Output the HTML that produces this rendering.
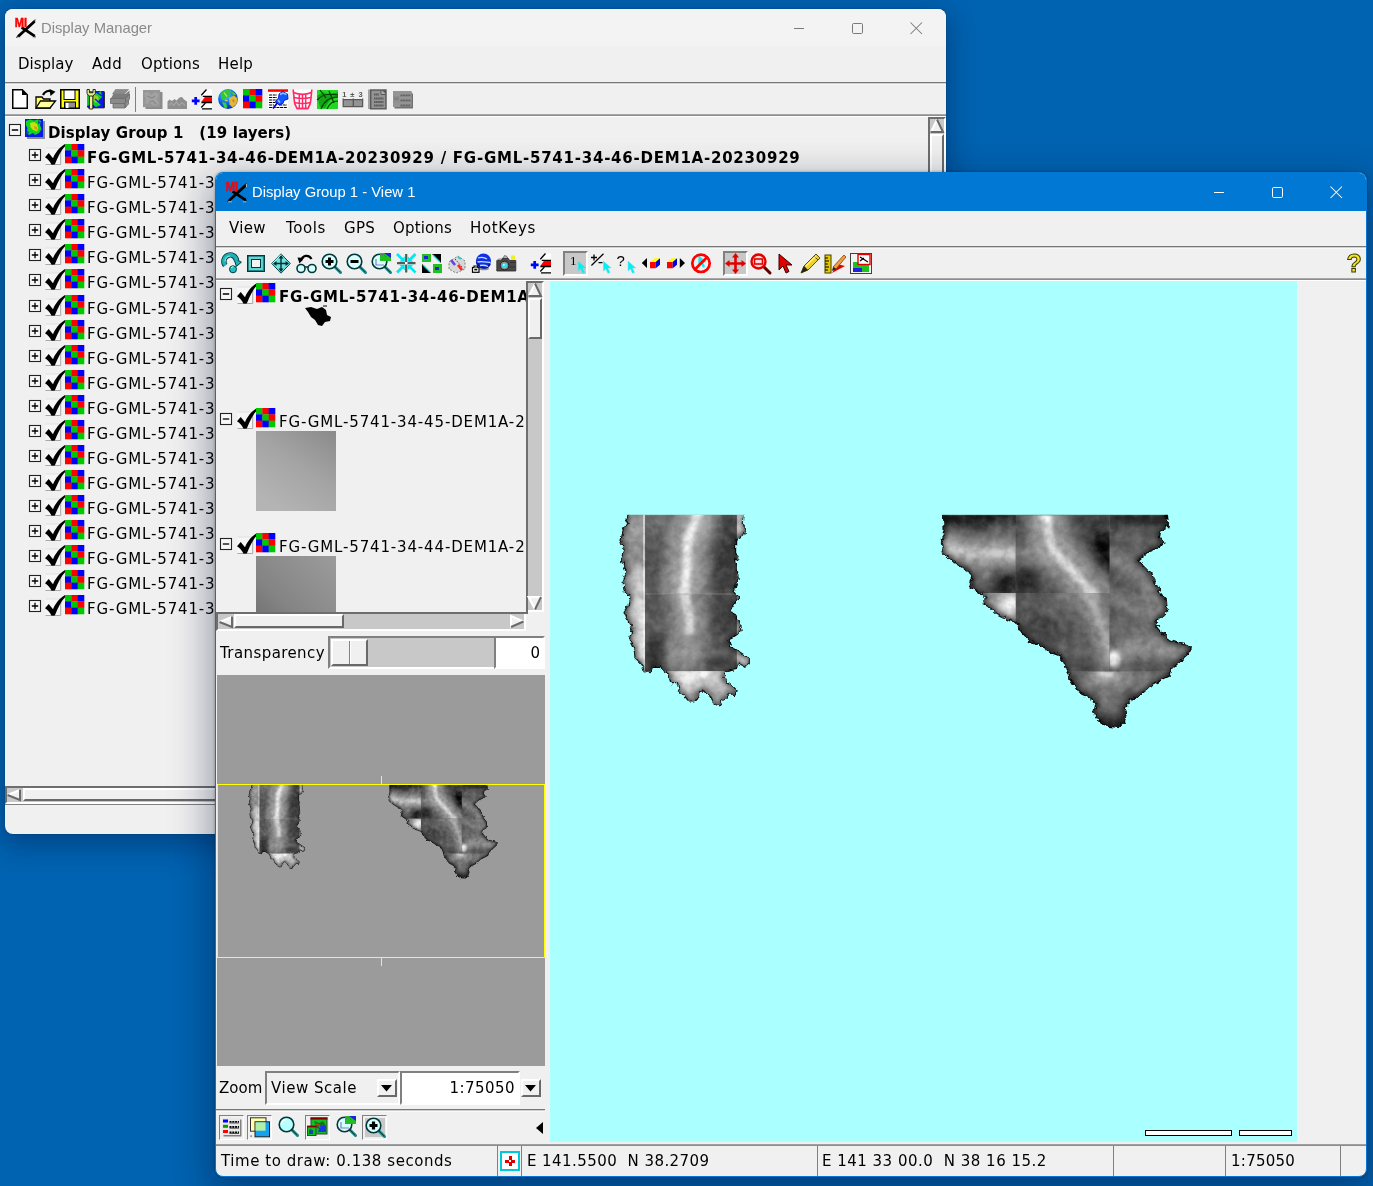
<!DOCTYPE html>
<html lang="en"><head><meta charset="utf-8"><title>Display Manager</title>
<style>
*{box-sizing:border-box;margin:0;padding:0}
html,body{width:1373px;height:1186px;overflow:hidden}
body{background:#0063b1;position:relative;font-family:"DejaVu Sans","Liberation Sans",sans-serif;font-size:15px;color:#000}
.abs{position:absolute}
.t{position:absolute;white-space:pre;line-height:20px;height:20px}
.b{font-weight:bold}
.win{position:absolute;background:#f0f0f0;overflow:hidden;will-change:transform}
#w1{left:5px;top:9px;width:941px;height:825px;border-radius:8px;box-shadow:0 8px 28px 4px rgba(0,20,60,.36),0 0 2px rgba(0,0,0,.3)}
#w2{left:215px;top:172px;width:1152px;height:1005px;border-radius:8px;box-shadow:0 14px 38px 6px rgba(0,15,50,.38),0 0 3px rgba(0,0,0,.35)}
.title{position:absolute;left:0;top:0;right:0;font-family:"Liberation Sans",sans-serif;font-size:14.8px}
.hl{position:absolute;height:3px;background:#d0d0d0;border-top:1px solid #787878;border-bottom:1px solid #f8f8f8}
.hl2{position:absolute;height:3px;background:#8c8c8c;border-top:1px solid #a8a8a8;border-bottom:1px solid #fff}
.raised{border:2px solid;border-color:#fff #696969 #696969 #fff;background:#f0f0f0}
.sunken{border:2px solid;border-color:#808080 #fff #fff #808080}
.trough{background:#c8c8c8}
svg{position:absolute;overflow:visible}
.row{position:absolute;left:0;height:25px}
</style></head>
<body>
<div class="win" id="w1">
<div class="title" style="height:37px;background:#f3f3f3;color:#8a8a8a">
<svg style="left:9.7px;top:8.2px" width="22" height="22" viewBox="0 0 22 22" ><path d="M3.100 19.500L19.700 4.200M6.600 10.400L19.700 19.100" stroke="#000" stroke-width="2.900" fill="none"/><path d="M19.700 4.200l.600-1.600M3.100 19.500l-1.700 1M19.700 19.100l.400 1.600" stroke="#000" stroke-width="1.200" fill="none"/><path d="M2 20.800h4M17 20.800h3.500M20.500 3v3" stroke="#d8c8b8" stroke-width="1" fill="none" opacity=".800"/><text x="-.300" y="9.800" font-family="Liberation Sans,sans-serif" font-weight="bold" font-size="13.600" fill="#ff0000" stroke="#ff0000" stroke-width=".500" textLength="12.300" lengthAdjust="spacingAndGlyphs">MI</text></svg>
<div class="t" style="left:36px;top:9px;font-family:"Liberation Sans",sans-serif">Display Manager</div>
<svg style="left:0;top:0" width="1200" height="40"><path d="M789 19.5 h10" stroke="#7a7a7a" stroke-width="1" fill="none"/><rect x="847.5" y="14.5" width="10" height="10" rx="1.2" stroke="#7a7a7a" stroke-width="1" fill="none"/><path d="M905.5 13.5 l11.5 11.5 M917 13.5 l-11.5 11.5" stroke="#7a7a7a" stroke-width="1.05" fill="none"/></svg>
</div>
<div class="t " style="left:13px;top:45px;letter-spacing:0.000px;">Display</div>
<div class="t " style="left:87px;top:45px;letter-spacing:0.318px;">Add</div>
<div class="t " style="left:136px;top:45px;letter-spacing:0.158px;">Options</div>
<div class="t " style="left:213px;top:45px;letter-spacing:0.199px;">Help</div>
<div class="hl" style="left:0;right:0;top:73px"></div>
<svg style="left:7px;top:80px" width="16" height="20" viewBox="0 0 16 20" ><path d="M.75 .75h9.5l5 5v13.5H.75z" fill="#fff" stroke="#000" stroke-width="1.5"/><path d="M10 1v5h5z" fill="#000"/></svg>
<svg style="left:30px;top:80px" width="21" height="20" viewBox="0 0 21 20" ><path d="M1 8h6l1.5 2H15v9H1z" fill="#ffff60" stroke="#000" stroke-width="1.3"/><path d="M1 19l4.5-7H20.5L15 19z" fill="#ffffa0" stroke="#000" stroke-width="1.3"/><path d="M8 6c1.5-4 6-5 9-3.2" stroke="#000" stroke-width="2.2" fill="none"/><path d="M14.5 0L20.5 2.8 15.5 7z" fill="#000"/></svg>
<svg style="left:55px;top:80px" width="20" height="20" viewBox="0 0 20 20" ><rect x=".75" y=".75" width="18.5" height="18.5" fill="#ffff00" stroke="#000" stroke-width="1.5"/><rect x="4" y="1" width="11" height="9.5" fill="#fff" stroke="#000" stroke-width="1"/><rect x="4.5" y="13" width="11" height="6" fill="#909090" stroke="#000" stroke-width="1"/><rect x="6" y="14" width="2.5" height="5" fill="#fff"/></svg>
<svg style="left:81px;top:80px" width="20" height="21" viewBox="0 0 20 21" ><rect x="1" y="2" width="17" height="16.500" fill="#0818f0"/><path d="M1 3l6-1 5 2 3-2 1 6-4 4 3 4-5 2-4-3-5 2z" fill="#10d020"/><path d="M8 6l4 1 1 4-3 3-3-2z" fill="#90d020"/><path d="M10 3l6 4M9 10l6 5" stroke="#0818f0" stroke-width="1.400"/><path d="M18.300 2.500V18.800H2" stroke="#000" stroke-width="1" fill="none"/><path d="M3.400 6.500h3.400V20H3.400z" fill="#f4ec98" stroke="#000" stroke-width=".800"/><path d="M1 .500v4.200l2.400 2.300h3.400l2.500-2.300V.500H7v3.300H3.400V.500z" fill="#f4ec98" stroke="#000" stroke-width=".800"/></svg>
<svg style="left:105px;top:80px" width="21" height="20" viewBox="0 0 21 20" ><path d="M5.500 .500h13l-4 4.500H2.500z" fill="#8c8c8c" stroke="#7a7a7a" stroke-width=".600"/><path d="M.500 10l3-5h12l4-3.500v6l-4 4.500z" fill="#7c7c7c"/><path d="M.500 9.500h15v5h-15zM15.500 9.500l4-4.500v5l-4 4.500z" fill="#8a8a8a" stroke="#6c6c6c" stroke-width=".800"/><path d="M3 14.500h12v4.500H3zM15 14.500l3.500-3.500v4l-3.500 4z" fill="#909090" stroke="#6c6c6c" stroke-width=".800"/></svg>
<div class="abs" style="left:130px;top:78px;width:1px;height:25px;background:#808080"></div>
<svg style="left:138px;top:81px" width="20" height="20" viewBox="0 0 20 20" ><rect x="2.500" y="2" width="17" height="17" fill="#8a8a8a"/><rect x="0" y="0" width="17.200" height="17.200" fill="#969696"/><path d="M1 3l4-1 3 3 4-3 4 2-2 5 2 5-5 2-4-3-5 1 1-5z" fill="#a2a2a2"/><path d="M4 6l5 2 3-2M6 12l4-1 3 3" stroke="#8a8a8a" stroke-width="1.200" fill="none"/></svg>
<svg style="left:162px;top:88px" width="21" height="12" viewBox="0 0 21 12" ><path d="M.500 12V4.500l2-2 2.500 1.500 2.500-2 2 1.500 3-3 2.500-.500 2 2.500 3 2V12z" fill="#8e8e8e"/><path d="M2 8l2.500-2 2 2.500 3-3.500 2.500 3.500 3-3 3 3" stroke="#a4a4a4" stroke-width="1.200" fill="none"/></svg>
<svg style="left:181px;top:80px" width="26" height="21" viewBox="0 0 26 21" ><path d="M5.8 11.8h7.8M9.7 7.9v7.8" stroke="#0000ff" stroke-width="2.7"/><path d="M15.3 6.6L20.6 .6H26V7.4H16.2z" fill="#fff"/><path d="M15.4 13L19.2 7.5H26V13z" fill="#ff0000"/><path d="M19.4 14H26V19.8H16.4L15.2 18.4z" fill="#fff"/><path d="M15.3 6.3L20.5 .5M16.8 7.4H26M15.4 13.5H26M19.4 14.1L15.3 18.5M16 19.9H26" stroke="#000" stroke-width="1.3" fill="none"/></svg>
<svg style="left:212.5px;top:80.3px" width="20" height="20" viewBox="0 0 20 20" ><defs><radialGradient id="gl" cx=".4" cy=".3" r=".75"><stop offset="0" stop-color="#50d8ff"/><stop offset=".55" stop-color="#1068f0"/><stop offset="1" stop-color="#0828a0"/></radialGradient></defs><circle cx="10" cy="10" r="9.900" fill="url(#gl)"/><path d="M2.500 5c2-3 5-4.500 9-4.500l2 2.500-3 1.500 1 3-3 1-1.500 3-3-1-1-3z" fill="#30c838"/><path d="M11 9l5-2.500 3.500 3-1 5.500-4 3.500-3-3z" fill="#e0b838"/><path d="M13.500 10.500l3 .500-.500 3z" fill="#e07030"/><path d="M4 13l4 1 1.500 4.500-3 .500z" fill="#38d040"/><path d="M13 2l4 2 1 2-3 .500z" fill="#40c040"/><path d="M6 3.500l3 4M7 11l2.500 1" stroke="#e8e040" stroke-width="1.200"/></svg>
<svg style="left:238px;top:80px" width="19" height="19" viewBox="0 0 19 19" ><rect x="0.00" y="0.00" width="6.63" height="6.63" fill="#00c800"/><rect x="6.33" y="0.00" width="6.63" height="6.63" fill="#ff0000"/><rect x="12.66" y="0.00" width="6.63" height="6.63" fill="#0000ff"/><rect x="0.00" y="6.33" width="6.63" height="6.63" fill="#0000ff"/><rect x="6.33" y="6.33" width="6.63" height="6.63" fill="#00c800"/><rect x="12.66" y="6.33" width="6.63" height="6.63" fill="#ff0000"/><rect x="0.00" y="12.66" width="6.63" height="6.63" fill="#ff0000"/><rect x="6.33" y="12.66" width="6.63" height="6.63" fill="#0000ff"/><rect x="12.66" y="12.66" width="6.63" height="6.63" fill="#00c800"/></svg>
<svg style="left:262px;top:80px" width="22" height="21" viewBox="0 0 22 21" ><rect x="1" y="3" width="20" height="17" fill="#fff"/><rect x="1" y=".300" width="20" height="2.500" fill="#ff0000"/><path d="M2 6h8M2 8.500h8M2 11h8M2 13.500h7M2 16h5M12 16h8M2 18.500h18" stroke="#000" stroke-width="1.100" stroke-dasharray="3 .700"/><path d="M6 19.500l5.500-7" stroke="#0000c0" stroke-width="1.800"/><path d="M8.500 12.500l3.500 3.500 4-1.500 1-3 4-1.500-.500-5-5-2.500-3.500 2.500-.500 4z" fill="#1058ff" stroke="#0000c8" stroke-width=".800"/><path d="M13 5.500l3-1.500 3.500 1.500M11 11l2 2.500" stroke="#90c8ff" stroke-width="1.500" fill="none"/></svg>
<svg style="left:287px;top:80px" width="22" height="21" viewBox="0 0 22 21" ><path d="M1.200 .500c.300 4 .800 6 .800 9s.800 6.500 3 10h11c2.200-3.500 3-7 3-10s.500-5 .800-9" fill="#fff" stroke="#ff2868" stroke-width="1.600"/><path d="M1.500 3.500c6 2.500 12 2.500 18 0M2 8.500c6 1.500 11 1.500 17 0M2.500 13.500c5 1.200 11 1.200 16 0M5 19.500h11M7.300 5v14.500M10.500 5.300v14.200M13.700 5v14.500" fill="none" stroke="#ff2868" stroke-width="1.500"/></svg>
<svg style="left:312px;top:81px" width="21" height="19" viewBox="0 0 21 19" ><rect width="21" height="19" fill="#20d820"/><path d="M0 6l6-4 6 3 9-3v5l-8 3-5 8-5-1z" fill="#109010" opacity=".7"/><path d="M0 10c6-6 12-7 21-5M4 19c3-8 8-12 17-12M10 19c2-5 5-8 11-8M3 0l6 8M12 1l5 12" stroke="#004000" stroke-width="1.2" fill="none"/></svg>
<svg style="left:337px;top:81px" width="22" height="18" viewBox="0 0 22 18" ><text x=".300" y="7" font-family="Liberation Sans,sans-serif" font-size="7.500" font-weight="bold" fill="#585858">1</text><text x="8.300" y="7" font-family="Liberation Sans,sans-serif" font-size="7.500" font-weight="bold" fill="#585858">±</text><text x="16.500" y="7" font-family="Liberation Sans,sans-serif" font-size="7.500" font-weight="bold" fill="#585858">3</text><rect x="1.200" y="9.700" width="19.300" height="6.900" fill="#949494"/><path d="M1.200 8.400v8.200h19.400V8.400M11.300 8.400v8.200M1.200 9.700h19.400" stroke="#585858" stroke-width="1.300" fill="none"/></svg>
<svg style="left:363px;top:80px" width="19" height="21" viewBox="0 0 19 21" ><rect x="0" y=".500" width="2.500" height="19.500" fill="#a4a4a4"/><rect x="2.700" y="1" width="15.300" height="18.800" fill="#949494" stroke="#585858" stroke-width="1.400"/><path d="M13 1.200v4.300h4.800" fill="#b0b0b0" stroke="#585858" stroke-width="1"/><path d="M14 1l4 4V1z" fill="#585858"/><path d="M6 5.500h5M6 9.500h9.500M6 13h9.500M6 16.500h9.500" stroke="#585858" stroke-width="1.800" stroke-dasharray="1.600 .500"/></svg>
<svg style="left:388px;top:82px" width="21" height="18" viewBox="0 0 21 18" ><path d="M1.500 1.500h17l1.500 1.500v14.500H1.500z" fill="#707070"/><rect x="0" y="0" width="18.700" height="16" fill="#949494"/><rect x="1" y="6.300" width="5" height="3" fill="#808080"/><path d="M7.500 4.300h10M7.500 9.500h10M7.500 14.500h10" stroke="#606060" stroke-width="1.800" stroke-dasharray="2 .600"/><path d="M0 5.500h18.700M0 10.700h18.700" stroke="#888" stroke-width=".600"/></svg>
<div class="hl2" style="left:0;right:0;top:105px"></div>
<svg style="left:3.5px;top:115px" width="12" height="12" viewBox="0 0 12 12" ><rect x=".5" y=".5" width="11" height="11" fill="#f8f8f8" stroke="#222" stroke-width="1.1"/><path d="M2.800 6h6.400" stroke="#000" stroke-width="1.300"/></svg>
<svg style="left:20px;top:110px" width="20" height="20" viewBox="0 0 20 20" ><rect x="2" y="2" width="18" height="18" fill="#8c8c8c"/><rect x="0" y="0" width="18" height="18" fill="#0818e8"/><path d="M1 2 L5 .500 L9 1.500 L13 .500 L16 2 L15 6 L16.500 10 L14 14 L10 16 L8 14 L4 16 L1.500 14 L2.500 9 L.800 6Z" fill="#10d818"/><path d="M5 4 L9 3 L12 5 L13.500 9 L12 12.500 L8 11 L5.500 8Z" fill="#c8e010"/><path d="M9 7 l3 1 l.500 3 l-3 -1z" fill="#e09818"/><path d="M1 11l3 2-1 3zM13 1l3 3-3 1z" fill="#0818e8" opacity=".700"/></svg>
<div class="t b" style="left:43px;top:114px;letter-spacing:0.086px;">Display Group 1   (19 layers)</div>
<svg style="left:23.5px;top:140px" width="12" height="12" viewBox="0 0 12 12" ><rect x=".5" y=".5" width="11" height="11" fill="#f8f8f8" stroke="#222" stroke-width="1.1"/><path d="M2.800 6h6.400M6 2.800v6.400" stroke="#000" stroke-width="1.300"/></svg>
<svg style="left:39px;top:135px" width="22" height="21" viewBox="0 0 22 21" ><rect x="1.5" y="4" width="15" height="16.500" fill="#f6f6f6"/><path d="M1.500 20.500h15.200V4" stroke="#a8a8a8" stroke-width="1" fill="none"/><path d="M1.500 4h15" stroke="#e0e0e0" stroke-width="1" fill="none"/><path d="M1 13.300 L4.700 9 L9 14.300 C11.500 8.500 15 3.800 21 .1 L21.700 1.500 C17 6 14.200 12.500 10.800 20.500 L7.600 20.700 C6 17.500 4 15.200 1 13.300Z" fill="#000"/></svg>
<svg style="left:60px;top:135px" width="19" height="19" viewBox="0 0 19 19" ><rect x="0.00" y="0.00" width="6.63" height="6.63" fill="#00c800"/><rect x="6.33" y="0.00" width="6.63" height="6.63" fill="#ff0000"/><rect x="12.66" y="0.00" width="6.63" height="6.63" fill="#0000ff"/><rect x="0.00" y="6.33" width="6.63" height="6.63" fill="#0000ff"/><rect x="6.33" y="6.33" width="6.63" height="6.63" fill="#00c800"/><rect x="12.66" y="6.33" width="6.63" height="6.63" fill="#ff0000"/><rect x="0.00" y="12.66" width="6.63" height="6.63" fill="#ff0000"/><rect x="6.33" y="12.66" width="6.63" height="6.63" fill="#0000ff"/><rect x="12.66" y="12.66" width="6.63" height="6.63" fill="#00c800"/></svg>
<div class="t b" style="left:82px;top:139px;letter-spacing:0.759px;">FG-GML-5741-34-46-DEM1A-20230929 / FG-GML-5741-34-46-DEM1A-20230929</div>
<svg style="left:23.5px;top:165px" width="12" height="12" viewBox="0 0 12 12" ><rect x=".5" y=".5" width="11" height="11" fill="#f8f8f8" stroke="#222" stroke-width="1.1"/><path d="M2.800 6h6.400M6 2.800v6.400" stroke="#000" stroke-width="1.300"/></svg>
<svg style="left:39px;top:160px" width="22" height="21" viewBox="0 0 22 21" ><rect x="1.5" y="4" width="15" height="16.500" fill="#f6f6f6"/><path d="M1.500 20.500h15.200V4" stroke="#a8a8a8" stroke-width="1" fill="none"/><path d="M1.500 4h15" stroke="#e0e0e0" stroke-width="1" fill="none"/><path d="M1 13.300 L4.700 9 L9 14.300 C11.500 8.500 15 3.800 21 .1 L21.700 1.500 C17 6 14.200 12.500 10.800 20.500 L7.600 20.700 C6 17.500 4 15.200 1 13.300Z" fill="#000"/></svg>
<svg style="left:60px;top:160px" width="19" height="19" viewBox="0 0 19 19" ><rect x="0.00" y="0.00" width="6.63" height="6.63" fill="#00c800"/><rect x="6.33" y="0.00" width="6.63" height="6.63" fill="#ff0000"/><rect x="12.66" y="0.00" width="6.63" height="6.63" fill="#0000ff"/><rect x="0.00" y="6.33" width="6.63" height="6.63" fill="#0000ff"/><rect x="6.33" y="6.33" width="6.63" height="6.63" fill="#00c800"/><rect x="12.66" y="6.33" width="6.63" height="6.63" fill="#ff0000"/><rect x="0.00" y="12.66" width="6.63" height="6.63" fill="#ff0000"/><rect x="6.33" y="12.66" width="6.63" height="6.63" fill="#0000ff"/><rect x="12.66" y="12.66" width="6.63" height="6.63" fill="#00c800"/></svg>
<div class="t " style="left:82px;top:164px;letter-spacing:0.85px;">FG-GML-5741-34-45-DEM1A-20230929</div>
<svg style="left:23.5px;top:190px" width="12" height="12" viewBox="0 0 12 12" ><rect x=".5" y=".5" width="11" height="11" fill="#f8f8f8" stroke="#222" stroke-width="1.1"/><path d="M2.800 6h6.400M6 2.800v6.400" stroke="#000" stroke-width="1.300"/></svg>
<svg style="left:39px;top:185px" width="22" height="21" viewBox="0 0 22 21" ><rect x="1.5" y="4" width="15" height="16.500" fill="#f6f6f6"/><path d="M1.500 20.500h15.200V4" stroke="#a8a8a8" stroke-width="1" fill="none"/><path d="M1.500 4h15" stroke="#e0e0e0" stroke-width="1" fill="none"/><path d="M1 13.300 L4.700 9 L9 14.300 C11.500 8.500 15 3.800 21 .1 L21.700 1.500 C17 6 14.200 12.500 10.800 20.500 L7.600 20.700 C6 17.500 4 15.200 1 13.300Z" fill="#000"/></svg>
<svg style="left:60px;top:185px" width="19" height="19" viewBox="0 0 19 19" ><rect x="0.00" y="0.00" width="6.63" height="6.63" fill="#00c800"/><rect x="6.33" y="0.00" width="6.63" height="6.63" fill="#ff0000"/><rect x="12.66" y="0.00" width="6.63" height="6.63" fill="#0000ff"/><rect x="0.00" y="6.33" width="6.63" height="6.63" fill="#0000ff"/><rect x="6.33" y="6.33" width="6.63" height="6.63" fill="#00c800"/><rect x="12.66" y="6.33" width="6.63" height="6.63" fill="#ff0000"/><rect x="0.00" y="12.66" width="6.63" height="6.63" fill="#ff0000"/><rect x="6.33" y="12.66" width="6.63" height="6.63" fill="#0000ff"/><rect x="12.66" y="12.66" width="6.63" height="6.63" fill="#00c800"/></svg>
<div class="t " style="left:82px;top:189px;letter-spacing:0.85px;">FG-GML-5741-34-44-DEM1A-20230929</div>
<svg style="left:23.5px;top:215px" width="12" height="12" viewBox="0 0 12 12" ><rect x=".5" y=".5" width="11" height="11" fill="#f8f8f8" stroke="#222" stroke-width="1.1"/><path d="M2.800 6h6.400M6 2.800v6.400" stroke="#000" stroke-width="1.300"/></svg>
<svg style="left:39px;top:210px" width="22" height="21" viewBox="0 0 22 21" ><rect x="1.5" y="4" width="15" height="16.500" fill="#f6f6f6"/><path d="M1.500 20.500h15.200V4" stroke="#a8a8a8" stroke-width="1" fill="none"/><path d="M1.500 4h15" stroke="#e0e0e0" stroke-width="1" fill="none"/><path d="M1 13.300 L4.700 9 L9 14.300 C11.500 8.500 15 3.800 21 .1 L21.700 1.500 C17 6 14.200 12.500 10.800 20.500 L7.600 20.700 C6 17.500 4 15.200 1 13.300Z" fill="#000"/></svg>
<svg style="left:60px;top:210px" width="19" height="19" viewBox="0 0 19 19" ><rect x="0.00" y="0.00" width="6.63" height="6.63" fill="#00c800"/><rect x="6.33" y="0.00" width="6.63" height="6.63" fill="#ff0000"/><rect x="12.66" y="0.00" width="6.63" height="6.63" fill="#0000ff"/><rect x="0.00" y="6.33" width="6.63" height="6.63" fill="#0000ff"/><rect x="6.33" y="6.33" width="6.63" height="6.63" fill="#00c800"/><rect x="12.66" y="6.33" width="6.63" height="6.63" fill="#ff0000"/><rect x="0.00" y="12.66" width="6.63" height="6.63" fill="#ff0000"/><rect x="6.33" y="12.66" width="6.63" height="6.63" fill="#0000ff"/><rect x="12.66" y="12.66" width="6.63" height="6.63" fill="#00c800"/></svg>
<div class="t " style="left:82px;top:214px;letter-spacing:0.85px;">FG-GML-5741-34-43-DEM1A-20230929</div>
<svg style="left:23.5px;top:240px" width="12" height="12" viewBox="0 0 12 12" ><rect x=".5" y=".5" width="11" height="11" fill="#f8f8f8" stroke="#222" stroke-width="1.1"/><path d="M2.800 6h6.400M6 2.800v6.400" stroke="#000" stroke-width="1.300"/></svg>
<svg style="left:39px;top:235px" width="22" height="21" viewBox="0 0 22 21" ><rect x="1.5" y="4" width="15" height="16.500" fill="#f6f6f6"/><path d="M1.500 20.500h15.200V4" stroke="#a8a8a8" stroke-width="1" fill="none"/><path d="M1.500 4h15" stroke="#e0e0e0" stroke-width="1" fill="none"/><path d="M1 13.300 L4.700 9 L9 14.300 C11.500 8.500 15 3.800 21 .1 L21.700 1.500 C17 6 14.200 12.500 10.800 20.500 L7.600 20.700 C6 17.500 4 15.200 1 13.300Z" fill="#000"/></svg>
<svg style="left:60px;top:235px" width="19" height="19" viewBox="0 0 19 19" ><rect x="0.00" y="0.00" width="6.63" height="6.63" fill="#00c800"/><rect x="6.33" y="0.00" width="6.63" height="6.63" fill="#ff0000"/><rect x="12.66" y="0.00" width="6.63" height="6.63" fill="#0000ff"/><rect x="0.00" y="6.33" width="6.63" height="6.63" fill="#0000ff"/><rect x="6.33" y="6.33" width="6.63" height="6.63" fill="#00c800"/><rect x="12.66" y="6.33" width="6.63" height="6.63" fill="#ff0000"/><rect x="0.00" y="12.66" width="6.63" height="6.63" fill="#ff0000"/><rect x="6.33" y="12.66" width="6.63" height="6.63" fill="#0000ff"/><rect x="12.66" y="12.66" width="6.63" height="6.63" fill="#00c800"/></svg>
<div class="t " style="left:82px;top:239px;letter-spacing:0.85px;">FG-GML-5741-34-42-DEM1A-20230929</div>
<svg style="left:23.5px;top:265px" width="12" height="12" viewBox="0 0 12 12" ><rect x=".5" y=".5" width="11" height="11" fill="#f8f8f8" stroke="#222" stroke-width="1.1"/><path d="M2.800 6h6.400M6 2.800v6.400" stroke="#000" stroke-width="1.300"/></svg>
<svg style="left:39px;top:260px" width="22" height="21" viewBox="0 0 22 21" ><rect x="1.5" y="4" width="15" height="16.500" fill="#f6f6f6"/><path d="M1.500 20.500h15.200V4" stroke="#a8a8a8" stroke-width="1" fill="none"/><path d="M1.500 4h15" stroke="#e0e0e0" stroke-width="1" fill="none"/><path d="M1 13.300 L4.700 9 L9 14.300 C11.500 8.500 15 3.800 21 .1 L21.700 1.500 C17 6 14.200 12.500 10.800 20.500 L7.600 20.700 C6 17.500 4 15.200 1 13.300Z" fill="#000"/></svg>
<svg style="left:60px;top:260px" width="19" height="19" viewBox="0 0 19 19" ><rect x="0.00" y="0.00" width="6.63" height="6.63" fill="#00c800"/><rect x="6.33" y="0.00" width="6.63" height="6.63" fill="#ff0000"/><rect x="12.66" y="0.00" width="6.63" height="6.63" fill="#0000ff"/><rect x="0.00" y="6.33" width="6.63" height="6.63" fill="#0000ff"/><rect x="6.33" y="6.33" width="6.63" height="6.63" fill="#00c800"/><rect x="12.66" y="6.33" width="6.63" height="6.63" fill="#ff0000"/><rect x="0.00" y="12.66" width="6.63" height="6.63" fill="#ff0000"/><rect x="6.33" y="12.66" width="6.63" height="6.63" fill="#0000ff"/><rect x="12.66" y="12.66" width="6.63" height="6.63" fill="#00c800"/></svg>
<div class="t " style="left:82px;top:264px;letter-spacing:0.85px;">FG-GML-5741-34-41-DEM1A-20230929</div>
<svg style="left:23.5px;top:291px" width="12" height="12" viewBox="0 0 12 12" ><rect x=".5" y=".5" width="11" height="11" fill="#f8f8f8" stroke="#222" stroke-width="1.1"/><path d="M2.800 6h6.400M6 2.800v6.400" stroke="#000" stroke-width="1.300"/></svg>
<svg style="left:39px;top:286px" width="22" height="21" viewBox="0 0 22 21" ><rect x="1.5" y="4" width="15" height="16.500" fill="#f6f6f6"/><path d="M1.500 20.500h15.200V4" stroke="#a8a8a8" stroke-width="1" fill="none"/><path d="M1.500 4h15" stroke="#e0e0e0" stroke-width="1" fill="none"/><path d="M1 13.300 L4.700 9 L9 14.300 C11.500 8.500 15 3.800 21 .1 L21.700 1.500 C17 6 14.200 12.500 10.800 20.500 L7.600 20.700 C6 17.500 4 15.200 1 13.300Z" fill="#000"/></svg>
<svg style="left:60px;top:286px" width="19" height="19" viewBox="0 0 19 19" ><rect x="0.00" y="0.00" width="6.63" height="6.63" fill="#00c800"/><rect x="6.33" y="0.00" width="6.63" height="6.63" fill="#ff0000"/><rect x="12.66" y="0.00" width="6.63" height="6.63" fill="#0000ff"/><rect x="0.00" y="6.33" width="6.63" height="6.63" fill="#0000ff"/><rect x="6.33" y="6.33" width="6.63" height="6.63" fill="#00c800"/><rect x="12.66" y="6.33" width="6.63" height="6.63" fill="#ff0000"/><rect x="0.00" y="12.66" width="6.63" height="6.63" fill="#ff0000"/><rect x="6.33" y="12.66" width="6.63" height="6.63" fill="#0000ff"/><rect x="12.66" y="12.66" width="6.63" height="6.63" fill="#00c800"/></svg>
<div class="t " style="left:82px;top:290px;letter-spacing:0.85px;">FG-GML-5741-34-40-DEM1A-20230929</div>
<svg style="left:23.5px;top:316px" width="12" height="12" viewBox="0 0 12 12" ><rect x=".5" y=".5" width="11" height="11" fill="#f8f8f8" stroke="#222" stroke-width="1.1"/><path d="M2.800 6h6.400M6 2.800v6.400" stroke="#000" stroke-width="1.300"/></svg>
<svg style="left:39px;top:311px" width="22" height="21" viewBox="0 0 22 21" ><rect x="1.5" y="4" width="15" height="16.500" fill="#f6f6f6"/><path d="M1.500 20.500h15.200V4" stroke="#a8a8a8" stroke-width="1" fill="none"/><path d="M1.500 4h15" stroke="#e0e0e0" stroke-width="1" fill="none"/><path d="M1 13.300 L4.700 9 L9 14.300 C11.500 8.500 15 3.800 21 .1 L21.700 1.500 C17 6 14.200 12.500 10.800 20.500 L7.600 20.700 C6 17.500 4 15.200 1 13.300Z" fill="#000"/></svg>
<svg style="left:60px;top:311px" width="19" height="19" viewBox="0 0 19 19" ><rect x="0.00" y="0.00" width="6.63" height="6.63" fill="#00c800"/><rect x="6.33" y="0.00" width="6.63" height="6.63" fill="#ff0000"/><rect x="12.66" y="0.00" width="6.63" height="6.63" fill="#0000ff"/><rect x="0.00" y="6.33" width="6.63" height="6.63" fill="#0000ff"/><rect x="6.33" y="6.33" width="6.63" height="6.63" fill="#00c800"/><rect x="12.66" y="6.33" width="6.63" height="6.63" fill="#ff0000"/><rect x="0.00" y="12.66" width="6.63" height="6.63" fill="#ff0000"/><rect x="6.33" y="12.66" width="6.63" height="6.63" fill="#0000ff"/><rect x="12.66" y="12.66" width="6.63" height="6.63" fill="#00c800"/></svg>
<div class="t " style="left:82px;top:315px;letter-spacing:0.85px;">FG-GML-5741-34-39-DEM1A-20230929</div>
<svg style="left:23.5px;top:341px" width="12" height="12" viewBox="0 0 12 12" ><rect x=".5" y=".5" width="11" height="11" fill="#f8f8f8" stroke="#222" stroke-width="1.1"/><path d="M2.800 6h6.400M6 2.800v6.400" stroke="#000" stroke-width="1.300"/></svg>
<svg style="left:39px;top:336px" width="22" height="21" viewBox="0 0 22 21" ><rect x="1.5" y="4" width="15" height="16.500" fill="#f6f6f6"/><path d="M1.500 20.500h15.200V4" stroke="#a8a8a8" stroke-width="1" fill="none"/><path d="M1.500 4h15" stroke="#e0e0e0" stroke-width="1" fill="none"/><path d="M1 13.300 L4.700 9 L9 14.300 C11.500 8.500 15 3.800 21 .1 L21.700 1.500 C17 6 14.200 12.500 10.800 20.500 L7.600 20.700 C6 17.500 4 15.200 1 13.300Z" fill="#000"/></svg>
<svg style="left:60px;top:336px" width="19" height="19" viewBox="0 0 19 19" ><rect x="0.00" y="0.00" width="6.63" height="6.63" fill="#00c800"/><rect x="6.33" y="0.00" width="6.63" height="6.63" fill="#ff0000"/><rect x="12.66" y="0.00" width="6.63" height="6.63" fill="#0000ff"/><rect x="0.00" y="6.33" width="6.63" height="6.63" fill="#0000ff"/><rect x="6.33" y="6.33" width="6.63" height="6.63" fill="#00c800"/><rect x="12.66" y="6.33" width="6.63" height="6.63" fill="#ff0000"/><rect x="0.00" y="12.66" width="6.63" height="6.63" fill="#ff0000"/><rect x="6.33" y="12.66" width="6.63" height="6.63" fill="#0000ff"/><rect x="12.66" y="12.66" width="6.63" height="6.63" fill="#00c800"/></svg>
<div class="t " style="left:82px;top:340px;letter-spacing:0.85px;">FG-GML-5741-34-38-DEM1A-20230929</div>
<svg style="left:23.5px;top:366px" width="12" height="12" viewBox="0 0 12 12" ><rect x=".5" y=".5" width="11" height="11" fill="#f8f8f8" stroke="#222" stroke-width="1.1"/><path d="M2.800 6h6.400M6 2.800v6.400" stroke="#000" stroke-width="1.300"/></svg>
<svg style="left:39px;top:361px" width="22" height="21" viewBox="0 0 22 21" ><rect x="1.5" y="4" width="15" height="16.500" fill="#f6f6f6"/><path d="M1.500 20.500h15.200V4" stroke="#a8a8a8" stroke-width="1" fill="none"/><path d="M1.500 4h15" stroke="#e0e0e0" stroke-width="1" fill="none"/><path d="M1 13.300 L4.700 9 L9 14.300 C11.500 8.500 15 3.800 21 .1 L21.700 1.500 C17 6 14.200 12.500 10.800 20.500 L7.600 20.700 C6 17.500 4 15.200 1 13.300Z" fill="#000"/></svg>
<svg style="left:60px;top:361px" width="19" height="19" viewBox="0 0 19 19" ><rect x="0.00" y="0.00" width="6.63" height="6.63" fill="#00c800"/><rect x="6.33" y="0.00" width="6.63" height="6.63" fill="#ff0000"/><rect x="12.66" y="0.00" width="6.63" height="6.63" fill="#0000ff"/><rect x="0.00" y="6.33" width="6.63" height="6.63" fill="#0000ff"/><rect x="6.33" y="6.33" width="6.63" height="6.63" fill="#00c800"/><rect x="12.66" y="6.33" width="6.63" height="6.63" fill="#ff0000"/><rect x="0.00" y="12.66" width="6.63" height="6.63" fill="#ff0000"/><rect x="6.33" y="12.66" width="6.63" height="6.63" fill="#0000ff"/><rect x="12.66" y="12.66" width="6.63" height="6.63" fill="#00c800"/></svg>
<div class="t " style="left:82px;top:365px;letter-spacing:0.85px;">FG-GML-5741-34-37-DEM1A-20230929</div>
<svg style="left:23.5px;top:391px" width="12" height="12" viewBox="0 0 12 12" ><rect x=".5" y=".5" width="11" height="11" fill="#f8f8f8" stroke="#222" stroke-width="1.1"/><path d="M2.800 6h6.400M6 2.800v6.400" stroke="#000" stroke-width="1.300"/></svg>
<svg style="left:39px;top:386px" width="22" height="21" viewBox="0 0 22 21" ><rect x="1.5" y="4" width="15" height="16.500" fill="#f6f6f6"/><path d="M1.500 20.500h15.200V4" stroke="#a8a8a8" stroke-width="1" fill="none"/><path d="M1.500 4h15" stroke="#e0e0e0" stroke-width="1" fill="none"/><path d="M1 13.300 L4.700 9 L9 14.300 C11.500 8.500 15 3.800 21 .1 L21.700 1.500 C17 6 14.200 12.500 10.800 20.500 L7.600 20.700 C6 17.500 4 15.200 1 13.300Z" fill="#000"/></svg>
<svg style="left:60px;top:386px" width="19" height="19" viewBox="0 0 19 19" ><rect x="0.00" y="0.00" width="6.63" height="6.63" fill="#00c800"/><rect x="6.33" y="0.00" width="6.63" height="6.63" fill="#ff0000"/><rect x="12.66" y="0.00" width="6.63" height="6.63" fill="#0000ff"/><rect x="0.00" y="6.33" width="6.63" height="6.63" fill="#0000ff"/><rect x="6.33" y="6.33" width="6.63" height="6.63" fill="#00c800"/><rect x="12.66" y="6.33" width="6.63" height="6.63" fill="#ff0000"/><rect x="0.00" y="12.66" width="6.63" height="6.63" fill="#ff0000"/><rect x="6.33" y="12.66" width="6.63" height="6.63" fill="#0000ff"/><rect x="12.66" y="12.66" width="6.63" height="6.63" fill="#00c800"/></svg>
<div class="t " style="left:82px;top:390px;letter-spacing:0.85px;">FG-GML-5741-34-36-DEM1A-20230929</div>
<svg style="left:23.5px;top:416px" width="12" height="12" viewBox="0 0 12 12" ><rect x=".5" y=".5" width="11" height="11" fill="#f8f8f8" stroke="#222" stroke-width="1.1"/><path d="M2.800 6h6.400M6 2.800v6.400" stroke="#000" stroke-width="1.300"/></svg>
<svg style="left:39px;top:411px" width="22" height="21" viewBox="0 0 22 21" ><rect x="1.5" y="4" width="15" height="16.500" fill="#f6f6f6"/><path d="M1.500 20.500h15.200V4" stroke="#a8a8a8" stroke-width="1" fill="none"/><path d="M1.500 4h15" stroke="#e0e0e0" stroke-width="1" fill="none"/><path d="M1 13.300 L4.700 9 L9 14.300 C11.500 8.500 15 3.800 21 .1 L21.700 1.500 C17 6 14.200 12.500 10.800 20.500 L7.600 20.700 C6 17.500 4 15.200 1 13.300Z" fill="#000"/></svg>
<svg style="left:60px;top:411px" width="19" height="19" viewBox="0 0 19 19" ><rect x="0.00" y="0.00" width="6.63" height="6.63" fill="#00c800"/><rect x="6.33" y="0.00" width="6.63" height="6.63" fill="#ff0000"/><rect x="12.66" y="0.00" width="6.63" height="6.63" fill="#0000ff"/><rect x="0.00" y="6.33" width="6.63" height="6.63" fill="#0000ff"/><rect x="6.33" y="6.33" width="6.63" height="6.63" fill="#00c800"/><rect x="12.66" y="6.33" width="6.63" height="6.63" fill="#ff0000"/><rect x="0.00" y="12.66" width="6.63" height="6.63" fill="#ff0000"/><rect x="6.33" y="12.66" width="6.63" height="6.63" fill="#0000ff"/><rect x="12.66" y="12.66" width="6.63" height="6.63" fill="#00c800"/></svg>
<div class="t " style="left:82px;top:415px;letter-spacing:0.85px;">FG-GML-5741-34-35-DEM1A-20230929</div>
<svg style="left:23.5px;top:441px" width="12" height="12" viewBox="0 0 12 12" ><rect x=".5" y=".5" width="11" height="11" fill="#f8f8f8" stroke="#222" stroke-width="1.1"/><path d="M2.800 6h6.400M6 2.800v6.400" stroke="#000" stroke-width="1.300"/></svg>
<svg style="left:39px;top:436px" width="22" height="21" viewBox="0 0 22 21" ><rect x="1.5" y="4" width="15" height="16.500" fill="#f6f6f6"/><path d="M1.500 20.500h15.200V4" stroke="#a8a8a8" stroke-width="1" fill="none"/><path d="M1.500 4h15" stroke="#e0e0e0" stroke-width="1" fill="none"/><path d="M1 13.300 L4.700 9 L9 14.300 C11.500 8.500 15 3.800 21 .1 L21.700 1.500 C17 6 14.200 12.500 10.800 20.500 L7.600 20.700 C6 17.500 4 15.200 1 13.300Z" fill="#000"/></svg>
<svg style="left:60px;top:436px" width="19" height="19" viewBox="0 0 19 19" ><rect x="0.00" y="0.00" width="6.63" height="6.63" fill="#00c800"/><rect x="6.33" y="0.00" width="6.63" height="6.63" fill="#ff0000"/><rect x="12.66" y="0.00" width="6.63" height="6.63" fill="#0000ff"/><rect x="0.00" y="6.33" width="6.63" height="6.63" fill="#0000ff"/><rect x="6.33" y="6.33" width="6.63" height="6.63" fill="#00c800"/><rect x="12.66" y="6.33" width="6.63" height="6.63" fill="#ff0000"/><rect x="0.00" y="12.66" width="6.63" height="6.63" fill="#ff0000"/><rect x="6.33" y="12.66" width="6.63" height="6.63" fill="#0000ff"/><rect x="12.66" y="12.66" width="6.63" height="6.63" fill="#00c800"/></svg>
<div class="t " style="left:82px;top:440px;letter-spacing:0.85px;">FG-GML-5741-34-34-DEM1A-20230929</div>
<svg style="left:23.5px;top:466px" width="12" height="12" viewBox="0 0 12 12" ><rect x=".5" y=".5" width="11" height="11" fill="#f8f8f8" stroke="#222" stroke-width="1.1"/><path d="M2.800 6h6.400M6 2.800v6.400" stroke="#000" stroke-width="1.300"/></svg>
<svg style="left:39px;top:461px" width="22" height="21" viewBox="0 0 22 21" ><rect x="1.5" y="4" width="15" height="16.500" fill="#f6f6f6"/><path d="M1.500 20.500h15.200V4" stroke="#a8a8a8" stroke-width="1" fill="none"/><path d="M1.500 4h15" stroke="#e0e0e0" stroke-width="1" fill="none"/><path d="M1 13.300 L4.700 9 L9 14.300 C11.500 8.500 15 3.800 21 .1 L21.700 1.500 C17 6 14.200 12.500 10.800 20.500 L7.600 20.700 C6 17.500 4 15.200 1 13.300Z" fill="#000"/></svg>
<svg style="left:60px;top:461px" width="19" height="19" viewBox="0 0 19 19" ><rect x="0.00" y="0.00" width="6.63" height="6.63" fill="#00c800"/><rect x="6.33" y="0.00" width="6.63" height="6.63" fill="#ff0000"/><rect x="12.66" y="0.00" width="6.63" height="6.63" fill="#0000ff"/><rect x="0.00" y="6.33" width="6.63" height="6.63" fill="#0000ff"/><rect x="6.33" y="6.33" width="6.63" height="6.63" fill="#00c800"/><rect x="12.66" y="6.33" width="6.63" height="6.63" fill="#ff0000"/><rect x="0.00" y="12.66" width="6.63" height="6.63" fill="#ff0000"/><rect x="6.33" y="12.66" width="6.63" height="6.63" fill="#0000ff"/><rect x="12.66" y="12.66" width="6.63" height="6.63" fill="#00c800"/></svg>
<div class="t " style="left:82px;top:465px;letter-spacing:0.85px;">FG-GML-5741-34-33-DEM1A-20230929</div>
<svg style="left:23.5px;top:491px" width="12" height="12" viewBox="0 0 12 12" ><rect x=".5" y=".5" width="11" height="11" fill="#f8f8f8" stroke="#222" stroke-width="1.1"/><path d="M2.800 6h6.400M6 2.800v6.400" stroke="#000" stroke-width="1.300"/></svg>
<svg style="left:39px;top:486px" width="22" height="21" viewBox="0 0 22 21" ><rect x="1.5" y="4" width="15" height="16.500" fill="#f6f6f6"/><path d="M1.500 20.500h15.200V4" stroke="#a8a8a8" stroke-width="1" fill="none"/><path d="M1.500 4h15" stroke="#e0e0e0" stroke-width="1" fill="none"/><path d="M1 13.300 L4.700 9 L9 14.300 C11.500 8.500 15 3.800 21 .1 L21.700 1.500 C17 6 14.200 12.500 10.800 20.500 L7.600 20.700 C6 17.500 4 15.200 1 13.300Z" fill="#000"/></svg>
<svg style="left:60px;top:486px" width="19" height="19" viewBox="0 0 19 19" ><rect x="0.00" y="0.00" width="6.63" height="6.63" fill="#00c800"/><rect x="6.33" y="0.00" width="6.63" height="6.63" fill="#ff0000"/><rect x="12.66" y="0.00" width="6.63" height="6.63" fill="#0000ff"/><rect x="0.00" y="6.33" width="6.63" height="6.63" fill="#0000ff"/><rect x="6.33" y="6.33" width="6.63" height="6.63" fill="#00c800"/><rect x="12.66" y="6.33" width="6.63" height="6.63" fill="#ff0000"/><rect x="0.00" y="12.66" width="6.63" height="6.63" fill="#ff0000"/><rect x="6.33" y="12.66" width="6.63" height="6.63" fill="#0000ff"/><rect x="12.66" y="12.66" width="6.63" height="6.63" fill="#00c800"/></svg>
<div class="t " style="left:82px;top:490px;letter-spacing:0.85px;">FG-GML-5741-34-32-DEM1A-20230929</div>
<svg style="left:23.5px;top:516px" width="12" height="12" viewBox="0 0 12 12" ><rect x=".5" y=".5" width="11" height="11" fill="#f8f8f8" stroke="#222" stroke-width="1.1"/><path d="M2.800 6h6.400M6 2.800v6.400" stroke="#000" stroke-width="1.300"/></svg>
<svg style="left:39px;top:511px" width="22" height="21" viewBox="0 0 22 21" ><rect x="1.5" y="4" width="15" height="16.500" fill="#f6f6f6"/><path d="M1.500 20.500h15.200V4" stroke="#a8a8a8" stroke-width="1" fill="none"/><path d="M1.500 4h15" stroke="#e0e0e0" stroke-width="1" fill="none"/><path d="M1 13.300 L4.700 9 L9 14.300 C11.500 8.500 15 3.800 21 .1 L21.700 1.500 C17 6 14.200 12.500 10.800 20.500 L7.600 20.700 C6 17.500 4 15.200 1 13.300Z" fill="#000"/></svg>
<svg style="left:60px;top:511px" width="19" height="19" viewBox="0 0 19 19" ><rect x="0.00" y="0.00" width="6.63" height="6.63" fill="#00c800"/><rect x="6.33" y="0.00" width="6.63" height="6.63" fill="#ff0000"/><rect x="12.66" y="0.00" width="6.63" height="6.63" fill="#0000ff"/><rect x="0.00" y="6.33" width="6.63" height="6.63" fill="#0000ff"/><rect x="6.33" y="6.33" width="6.63" height="6.63" fill="#00c800"/><rect x="12.66" y="6.33" width="6.63" height="6.63" fill="#ff0000"/><rect x="0.00" y="12.66" width="6.63" height="6.63" fill="#ff0000"/><rect x="6.33" y="12.66" width="6.63" height="6.63" fill="#0000ff"/><rect x="12.66" y="12.66" width="6.63" height="6.63" fill="#00c800"/></svg>
<div class="t " style="left:82px;top:515px;letter-spacing:0.85px;">FG-GML-5741-34-31-DEM1A-20230929</div>
<svg style="left:23.5px;top:541px" width="12" height="12" viewBox="0 0 12 12" ><rect x=".5" y=".5" width="11" height="11" fill="#f8f8f8" stroke="#222" stroke-width="1.1"/><path d="M2.800 6h6.400M6 2.800v6.400" stroke="#000" stroke-width="1.300"/></svg>
<svg style="left:39px;top:536px" width="22" height="21" viewBox="0 0 22 21" ><rect x="1.5" y="4" width="15" height="16.500" fill="#f6f6f6"/><path d="M1.500 20.500h15.200V4" stroke="#a8a8a8" stroke-width="1" fill="none"/><path d="M1.500 4h15" stroke="#e0e0e0" stroke-width="1" fill="none"/><path d="M1 13.300 L4.700 9 L9 14.300 C11.500 8.500 15 3.800 21 .1 L21.700 1.500 C17 6 14.200 12.500 10.800 20.500 L7.600 20.700 C6 17.500 4 15.200 1 13.300Z" fill="#000"/></svg>
<svg style="left:60px;top:536px" width="19" height="19" viewBox="0 0 19 19" ><rect x="0.00" y="0.00" width="6.63" height="6.63" fill="#00c800"/><rect x="6.33" y="0.00" width="6.63" height="6.63" fill="#ff0000"/><rect x="12.66" y="0.00" width="6.63" height="6.63" fill="#0000ff"/><rect x="0.00" y="6.33" width="6.63" height="6.63" fill="#0000ff"/><rect x="6.33" y="6.33" width="6.63" height="6.63" fill="#00c800"/><rect x="12.66" y="6.33" width="6.63" height="6.63" fill="#ff0000"/><rect x="0.00" y="12.66" width="6.63" height="6.63" fill="#ff0000"/><rect x="6.33" y="12.66" width="6.63" height="6.63" fill="#0000ff"/><rect x="12.66" y="12.66" width="6.63" height="6.63" fill="#00c800"/></svg>
<div class="t " style="left:82px;top:540px;letter-spacing:0.85px;">FG-GML-5741-34-30-DEM1A-20230929</div>
<svg style="left:23.5px;top:566px" width="12" height="12" viewBox="0 0 12 12" ><rect x=".5" y=".5" width="11" height="11" fill="#f8f8f8" stroke="#222" stroke-width="1.1"/><path d="M2.800 6h6.400M6 2.800v6.400" stroke="#000" stroke-width="1.300"/></svg>
<svg style="left:39px;top:561px" width="22" height="21" viewBox="0 0 22 21" ><rect x="1.5" y="4" width="15" height="16.500" fill="#f6f6f6"/><path d="M1.500 20.500h15.200V4" stroke="#a8a8a8" stroke-width="1" fill="none"/><path d="M1.500 4h15" stroke="#e0e0e0" stroke-width="1" fill="none"/><path d="M1 13.300 L4.700 9 L9 14.300 C11.500 8.500 15 3.800 21 .1 L21.700 1.500 C17 6 14.200 12.500 10.800 20.500 L7.600 20.700 C6 17.500 4 15.200 1 13.300Z" fill="#000"/></svg>
<svg style="left:60px;top:561px" width="19" height="19" viewBox="0 0 19 19" ><rect x="0.00" y="0.00" width="6.63" height="6.63" fill="#00c800"/><rect x="6.33" y="0.00" width="6.63" height="6.63" fill="#ff0000"/><rect x="12.66" y="0.00" width="6.63" height="6.63" fill="#0000ff"/><rect x="0.00" y="6.33" width="6.63" height="6.63" fill="#0000ff"/><rect x="6.33" y="6.33" width="6.63" height="6.63" fill="#00c800"/><rect x="12.66" y="6.33" width="6.63" height="6.63" fill="#ff0000"/><rect x="0.00" y="12.66" width="6.63" height="6.63" fill="#ff0000"/><rect x="6.33" y="12.66" width="6.63" height="6.63" fill="#0000ff"/><rect x="12.66" y="12.66" width="6.63" height="6.63" fill="#00c800"/></svg>
<div class="t " style="left:82px;top:565px;letter-spacing:0.85px;">FG-GML-5741-34-29-DEM1A-20230929</div>
<svg style="left:23.5px;top:591px" width="12" height="12" viewBox="0 0 12 12" ><rect x=".5" y=".5" width="11" height="11" fill="#f8f8f8" stroke="#222" stroke-width="1.1"/><path d="M2.800 6h6.400M6 2.800v6.400" stroke="#000" stroke-width="1.300"/></svg>
<svg style="left:39px;top:586px" width="22" height="21" viewBox="0 0 22 21" ><rect x="1.5" y="4" width="15" height="16.500" fill="#f6f6f6"/><path d="M1.500 20.500h15.200V4" stroke="#a8a8a8" stroke-width="1" fill="none"/><path d="M1.500 4h15" stroke="#e0e0e0" stroke-width="1" fill="none"/><path d="M1 13.300 L4.700 9 L9 14.300 C11.500 8.500 15 3.800 21 .1 L21.700 1.500 C17 6 14.200 12.500 10.800 20.500 L7.600 20.700 C6 17.500 4 15.200 1 13.300Z" fill="#000"/></svg>
<svg style="left:60px;top:586px" width="19" height="19" viewBox="0 0 19 19" ><rect x="0.00" y="0.00" width="6.63" height="6.63" fill="#00c800"/><rect x="6.33" y="0.00" width="6.63" height="6.63" fill="#ff0000"/><rect x="12.66" y="0.00" width="6.63" height="6.63" fill="#0000ff"/><rect x="0.00" y="6.33" width="6.63" height="6.63" fill="#0000ff"/><rect x="6.33" y="6.33" width="6.63" height="6.63" fill="#00c800"/><rect x="12.66" y="6.33" width="6.63" height="6.63" fill="#ff0000"/><rect x="0.00" y="12.66" width="6.63" height="6.63" fill="#ff0000"/><rect x="6.33" y="12.66" width="6.63" height="6.63" fill="#0000ff"/><rect x="12.66" y="12.66" width="6.63" height="6.63" fill="#00c800"/></svg>
<div class="t " style="left:82px;top:590px;letter-spacing:0.85px;">FG-GML-5741-34-28-DEM1A-20230929</div>
<div class="abs trough" style="left:923px;top:108px;width:18px;height:669px;border:2px solid;border-color:#6e6e6e #fff #fff #6e6e6e"></div>
<svg style="left:925px;top:110px" width="14" height="14" viewBox="0 0 14 14" ><path d="M7.0 0 L14 14 L0 14Z" fill="#f0f0f0"/><path d="M7.0 0.5 L1 13" stroke="#fff" stroke-width="2" fill="none"/><path d="M7.0 0.5 L13 13 L0.5 13" stroke="#696969" stroke-width="2" fill="none"/></svg>
<div class="abs raised" style="left:925px;top:125px;width:14px;height:600px"></div>
<div class="abs trough" style="left:0;top:777px;width:941px;height:18px;border:2px solid;border-color:#6e6e6e #fff #fff #6e6e6e"></div>
<svg style="left:2px;top:780px" width="14" height="12" viewBox="0 0 14 12" ><path d="M0 6.0 L14 0 L14 12Z" fill="#f0f0f0"/><path d="M0.5 6.0 L13 1" stroke="#fff" stroke-width="2" fill="none"/><path d="M0.5 6.0 L13 11 L13 0.5" stroke="#696969" stroke-width="2" fill="none"/></svg>
<div class="abs raised" style="left:18px;top:779px;width:700px;height:13px"></div>
<div class="abs" style="left:0;right:0;top:795px;height:1px;background:#808080"></div>
</div>
<div class="win" id="w2" style="border:1px solid #0078d4">
<div class="title" style="height:38px;background:#0078d4;color:#fff">
<svg style="left:10px;top:8px" width="22" height="22" viewBox="0 0 22 22" ><path d="M3.100 19.500L19.700 4.200M6.600 10.400L19.700 19.100" stroke="#000" stroke-width="2.900" fill="none"/><path d="M19.700 4.200l.600-1.600M3.100 19.500l-1.700 1M19.700 19.100l.400 1.600" stroke="#000" stroke-width="1.200" fill="none"/><path d="M2 20.800h4M17 20.800h3.500M20.500 3v3" stroke="#d8c8b8" stroke-width="1" fill="none" opacity=".800"/><text x="-.300" y="9.800" font-family="Liberation Sans,sans-serif" font-weight="bold" font-size="13.600" fill="#ff0000" stroke="#ff0000" stroke-width=".500" textLength="12.300" lengthAdjust="spacingAndGlyphs">MI</text></svg>
<div class="t" style="left:36px;top:9px;font-family:"Liberation Sans",sans-serif">Display Group 1 - View 1</div>
<svg style="left:0;top:0" width="1200" height="40"><path d="M998 19.5 h10" stroke="#fff" stroke-width="1" fill="none"/><rect x="1056.5" y="14.5" width="10" height="10" rx="1.2" stroke="#fff" stroke-width="1" fill="none"/><path d="M1114.5 13.5 l11.5 11.5 M1126 13.5 l-11.5 11.5" stroke="#fff" stroke-width="1.05" fill="none"/></svg>
</div>
<div class="t " style="left:13px;top:45px;letter-spacing:0.348px;">View</div>
<div class="t " style="left:70px;top:45px;letter-spacing:0.609px;">Tools</div>
<div class="t " style="left:128px;top:45px;letter-spacing:0.266px;">GPS</div>
<div class="t " style="left:177px;top:45px;letter-spacing:0.158px;">Options</div>
<div class="t " style="left:254px;top:45px;letter-spacing:0.663px;">HotKeys</div>
<div class="hl" style="left:0;right:0;top:73px"></div>
<svg style="left:5px;top:80px" width="21" height="21" viewBox="0 0 21 21" ><path d="M4.300 12.400A6.400 6.400 0 1 1 15.600 7.700" fill="none" stroke="#003c40" stroke-width="5.400"/><path d="M12.600 5l7.800 4.200-5 4.200z" fill="#20b0b8" stroke="#003c40" stroke-width="1"/><path d="M4.300 12.400A6.400 6.400 0 1 1 15.600 7.700" fill="none" stroke="#20b0b8" stroke-width="3.600"/><path d="M4 8.500A5.500 5.500 0 0 1 9 3" fill="none" stroke="#80e8e8" stroke-width="1.200"/><circle cx="12" cy="16.300" r="3.500" fill="#20c0c0" stroke="#003c40" stroke-width="1"/><path d="M10 15a2.200 2.200 0 0 1 2.500-1.200" stroke="#c0ffff" stroke-width="1" fill="none"/></svg>
<svg style="left:31px;top:82px" width="18" height="17" viewBox="0 0 18 17" ><rect x=".75" y=".75" width="16.5" height="15.5" fill="#60d8d8" stroke="#003838" stroke-width="1.5"/><rect x="4.5" y="4.5" width="9" height="8" fill="#f4f4f4" stroke="#003838" stroke-width="1"/><path d="M1.5 15.5h15v-14" stroke="#208888" stroke-width="1.2" fill="none"/></svg>
<svg style="left:55px;top:80px" width="20" height="21" viewBox="0 0 20 21" ><path d="M10 .8L19.3 10.5 10 20.2 .7 10.5z" fill="#70e0e0" stroke="#004848" stroke-width="1"/><path d="M10 3.5v14M3.5 10.5h13" stroke="#003030" stroke-width="1.4"/><path d="M10 2l-2.5 3.5h5zM10 19l-2.5-3.5h5zM2 10.5l3.5-2.5v5zM18 10.5l-3.5-2.5v5z" fill="#003030"/><path d="M10 1.5L1.5 10.5" stroke="#c8ffff" stroke-width="1"/></svg>
<svg style="left:80px;top:80px" width="21" height="21" viewBox="0 0 21 21" ><path d="M5 8C6 2 13 1 15.5 6" fill="none" stroke="#000" stroke-width="2.2"/><path d="M1.5 4.5L8 5 3.5 10.5z" fill="#000"/><circle cx="5" cy="15.5" r="4" fill="#d8ffff" stroke="#003838" stroke-width="1.6"/><circle cx="16" cy="15.5" r="4" fill="#d8ffff" stroke="#003838" stroke-width="1.6"/><path d="M9 14h3" stroke="#003838" stroke-width="1.6"/></svg>
<svg style="left:105px;top:80px" width="21" height="21" viewBox="0 0 21 21" ><path d="M13 13l6.5 6.5" stroke="#108888" stroke-width="3" stroke-linecap="round"/><path d="M13 13l6 6" stroke="#004848" stroke-width="1"/><circle cx="8.5" cy="8.5" r="7.3" fill="#d8ffff" stroke="#003838" stroke-width="1.6"/><path d="M8.5 4.5v8M4.5 8.5h8" stroke="#000" stroke-width="3"/></svg>
<svg style="left:130px;top:80px" width="21" height="21" viewBox="0 0 21 21" ><path d="M13 13l6.5 6.5" stroke="#108888" stroke-width="3" stroke-linecap="round"/><path d="M13 13l6 6" stroke="#004848" stroke-width="1"/><circle cx="8.5" cy="8.5" r="7.3" fill="#d8ffff" stroke="#003838" stroke-width="1.6"/><path d="M4.5 8.5h8" stroke="#000" stroke-width="3.2"/></svg>
<svg style="left:155px;top:80px" width="21" height="21" viewBox="0 0 21 21" ><path d="M13 13l6.5 6.5" stroke="#108888" stroke-width="3" stroke-linecap="round"/><path d="M13 13l6 6" stroke="#004848" stroke-width="1"/><circle cx="8.5" cy="8.5" r="7.3" fill="#d8ffff" stroke="#003838" stroke-width="1.6"/><rect x="9" y="0" width="11" height="8" fill="#20c020"/><path d="M13 0h7v5z" fill="#2020e0"/><path d="M9 3l3-2 3 3" stroke="#a040c0" fill="none"/><path d="M5 6v6h8" stroke="#8080c0" stroke-width="1.2" fill="none"/></svg>
<svg style="left:180px;top:80px" width="21" height="21" viewBox="0 0 21 21" ><path d="M10.200 1v18.500M1 10.200h18.500" stroke="#585858" stroke-width="2.200"/><g stroke="#00e8f0" stroke-width="2.600" fill="none"><path d="M1 1l6 6M19.500 1l-6 6M1 19.500l6-6M19.500 19.500l-6-6"/></g><g fill="#00e8f0"><path d="M8.800 8.800H3.300l5.500-5.500zM11.700 8.800V3.300l5.500 5.500zM8.800 11.700v5.500l-5.500-5.500zM11.700 11.700h5.500l-5.500 5.500z"/></g><rect x="9" y="9" width="2.500" height="2.500" fill="#fff"/></svg>
<svg style="left:205px;top:80px" width="22" height="21" viewBox="0 0 22 21" ><rect x="1" y="1" width="9" height="8" fill="#20c020"/><rect x="3" y="3" width="4" height="3" fill="#2020e0"/><rect x="12" y="11" width="9" height="9" fill="#20c020"/><rect x="14" y="14" width="4" height="3" fill="#2020e0"/><path d="M11 1l9 9V1z" fill="#000"/><path d="M1 11l9 9H1z" fill="#000"/><path d="M12 2l7 7" stroke="#30c8c8" stroke-width="1.2"/><path d="M2 12l7 7" stroke="#30c8c8" stroke-width="1.2"/></svg>
<svg style="left:230px;top:80px" width="21" height="21" viewBox="0 0 21 21" ><path d="M3 9l9-6 7 5v8l-9 4-7-4z" fill="#d8d8d8" stroke="#808080" stroke-dasharray="2 1.5"/><path d="M5 7l4 5" stroke="#6040e0" stroke-width="2.5"/><path d="M12 12l4 5" stroke="#ff2020" stroke-width="2.5"/><path d="M12 4l3 2" stroke="#30c8c8" stroke-width="2"/><path d="M9 6l8 9" stroke="#404040" stroke-width="1" stroke-dasharray="1.500 1.500"/></svg>
<svg style="left:255px;top:80px" width="21" height="21" viewBox="0 0 21 21" ><ellipse cx="13" cy="15.500" rx="5" ry="1.800" fill="#909090"/><circle cx="12.500" cy="8" r="7.600" fill="#1030e8"/><path d="M6 9a7 7 0 0 0 13 2" stroke="#0818a0" stroke-width="2" fill="none"/><path d="M7 5c3-1 6-1 9 1M6.500 9c4-1 8 0 13 .500M9 12.500c3-.500 6 0 8 1" stroke="#c0e0ff" stroke-width="1.300" fill="none"/><rect x="1.500" y="14.500" width="6.500" height="4.800" fill="#fff" stroke="#000" stroke-width="1.200"/><path d="M3 14.500v-1.500h3.500v1.500" fill="#fff" stroke="#000" stroke-width="1.200"/><rect x="3.300" y="15.800" width="3" height="1.600" fill="#000"/></svg>
<svg style="left:280px;top:81px" width="21" height="19" viewBox="0 0 21 19" ><path d="M16.500 1l2.500 1v4h-4V2z" fill="#f0f020"/><path d="M.800 6.500h4l2-2.500h5l2 2.500h6v10.500H.800z" fill="#484848" stroke="#282828" stroke-width=".800"/><path d="M.800 6.500l2-1.500h3M7 4l1.500-2.500 2 .500 1.300 2" fill="#b0b0b0" stroke="#505050" stroke-width=".600"/><circle cx="8.500" cy="11.500" r="4.300" fill="#909090" stroke="#202020" stroke-width="1"/><circle cx="8.500" cy="11.500" r="2.600" fill="#30e0f0"/><circle cx="7.800" cy="10.800" r=".900" fill="#fff"/><path d="M14 8.500h5M14 13h5.500" stroke="#303030" stroke-width="1"/></svg>
<svg style="left:309px;top:80px" width="26" height="21" viewBox="0 0 26 21" ><path d="M5.8 11.8h7.8M9.7 7.9v7.8" stroke="#0000ff" stroke-width="2.7"/><path d="M15.3 6.6L20.6 .6H26V7.4H16.2z" fill="#fff"/><path d="M15.4 13L19.2 7.5H26V13z" fill="#ff0000"/><path d="M19.4 14H26V19.8H16.4L15.2 18.4z" fill="#fff"/><path d="M15.3 6.3L20.5 .5M16.8 7.4H26M15.4 13.5H26M19.4 14.1L15.3 18.5M16 19.9H26" stroke="#000" stroke-width="1.3" fill="none"/></svg>
<div class="abs" style="left:347px;top:78px;width:25px;height:25px;background:#c8c8c8;border:2px solid;border-color:#808080 #fff #fff #808080"></div>
<svg style="left:349px;top:80px" width="24" height="22" viewBox="0 0 24 22" ><text x="5" y="12" font-family="Liberation Serif,serif" font-size="13" fill="#000">1</text><path d="M13.3 8.3l0 9.6 2.300-2.200 2.100 4.600 2-.900-2.100-4.500 3.300 0z" fill="#00f0f8" stroke="#60d8e0" stroke-width=".5"/></svg>
<svg style="left:374px;top:80px" width="24" height="22" viewBox="0 0 24 22" ><path d="M1.400 12.500L13.500 .800" stroke="#000" stroke-width="1.200"/><path d="M1 4.500h6M4 1.500v6M8.500 9.700h4" stroke="#000" stroke-width="1.300"/><path d="M13.5 8.3l0 9.6 2.300-2.200 2.100 4.600 2-.900-2.100-4.500 3.300 0z" fill="#00f0f8" stroke="#60d8e0" stroke-width=".5"/></svg>
<svg style="left:399px;top:80px" width="24" height="22" viewBox="0 0 24 22" ><text x="1.500" y="13" font-family="Liberation Sans,sans-serif" font-size="15" fill="#000">?</text><path d="M13.1 8.3l0 9.6 2.300-2.200 2.100 4.600 2-.900-2.100-4.500 3.300 0z" fill="#00f0f8" stroke="#60d8e0" stroke-width=".5"/></svg>
<svg style="left:425px;top:85px" width="20" height="11" viewBox="0 0 20 11" ><path d="M.800 5l5.200-5v10z" fill="#000"/><g transform="translate(9 0)"><path d="M0 4l4.700-3.800h5.300l-4.300 3.800z" fill="#ffff00"/><path d="M0 4h5.700v6.200H0z" fill="#ff0000"/><path d="M5.700 4l4.300-3.800v6.600l-4.300 3.400z" fill="#0000e0"/></g></svg>
<svg style="left:451px;top:85px" width="20" height="11" viewBox="0 0 20 11" ><g transform="translate(0 0)"><path d="M0 4l4.700-3.800h5.300l-4.300 3.800z" fill="#ffff00"/><path d="M0 4h5.700v6.200H0z" fill="#ff0000"/><path d="M5.700 4l4.300-3.800v6.600l-4.300 3.400z" fill="#0000e0"/></g><path d="M18 5l-5.200-5v10z" fill="#000"/></svg>
<svg style="left:474px;top:79px" width="22" height="23" viewBox="0 0 22 23" ><path d="M8.5 3.5l0 9.6 2.300-2.200 2.100 4.600 2-.900-2.100-4.500 3.300 0z" fill="#00f0f8" stroke="#60d8e0" stroke-width=".5"/><circle cx="11" cy="11.300" r="8.700" fill="none" stroke="#ff0000" stroke-width="2.700"/><path d="M4.800 17.500L17.200 5.100" stroke="#ff0000" stroke-width="2.700"/></svg>
<div class="abs" style="left:507px;top:78px;width:25px;height:25px;background:#c8c8c8;border:2px solid;border-color:#808080 #fff #fff #808080"></div>
<svg style="left:509px;top:80px" width="21" height="21" viewBox="0 0 21 21" ><path d="M10.500 2.500v16M2.500 10.500h16" stroke="#e00000" stroke-width="2.600"/><path d="M10.500 0l-3.500 4.500h7zM10.500 21l-3.500-4.500h7zM0 10.500l4.500-3.500v7zM21 10.500l-4.500-3.500v7z" fill="#e00000"/></svg>
<svg style="left:534px;top:80px" width="22" height="22" viewBox="0 0 22 22" ><path d="M13 13l7 7" stroke="#600000" stroke-width="3" stroke-linecap="round"/><circle cx="8.500" cy="8.500" r="7" fill="#ffd8d8" stroke="#e00000" stroke-width="2.400"/><rect x="4.500" y="6" width="8" height="5" fill="none" stroke="#e00000" stroke-width="1.600"/></svg>
<svg style="left:561px;top:80px" width="16" height="22" viewBox="0 0 16 22" ><path d="M2 1l0 16 4-4 3 7 3-1.500-3-6.500 6 0z" fill="#e00000" stroke="#400000" stroke-width="1"/></svg>
<svg style="left:584px;top:79px" width="22" height="22" viewBox="0 0 22 22" ><path d="M1 21l3-7L16 2l4 4L8 18z" fill="#f0d020" stroke="#605000" stroke-width="1"/><path d="M1 21l3-7 4 4z" fill="#202020"/><path d="M14 4l4 4" stroke="#605000"/><path d="M6 14l10-10" stroke="#fff8a0" stroke-width="1.200"/></svg>
<svg style="left:608px;top:79px" width="23" height="22" viewBox="0 0 23 22" ><rect x="1" y="3" width="6" height="18" fill="#e8c800" stroke="#404000"/><path d="M1 6h3M1 9h4M1 12h3M1 15h4M1 18h3" stroke="#000"/><path d="M8 21l13-7-8-2z" fill="#e00000"/><path d="M9 15L20 3l2 2L12 17z" fill="#f0a040" stroke="#804000" stroke-width=".800"/><path d="M9 15l-1 4 4-2z" fill="#202020"/></svg>
<svg style="left:634px;top:80px" width="22" height="21" viewBox="0 0 22 21" ><rect x=".500" y=".500" width="21" height="20" fill="#f4f4f4" stroke="#404040"/><rect x="3" y="9" width="16" height="10" fill="#20c020"/><rect x="3" y="15" width="9" height="4" fill="#2020e0"/><rect x="8" y="1.500" width="12" height="10" fill="#fff" stroke="#e00000" stroke-width="1.400"/><path d="M10 4l8 5M10 8l4-3" stroke="#000" stroke-width="1.200"/></svg>
<div class="t b" style="left:1130.5px;top:77px;font-size:25px;line-height:26px;height:26px;color:#f4e428;-webkit-text-stroke:1px #383800;font-family:Liberation Sans,sans-serif">?</div>
<div class="hl2" style="left:0;right:0;top:105px"></div>
<div class="abs" style="left:0;top:108px;width:312px;height:333px;border-right:2px solid #6e6e6e;border-bottom:2px solid #6e6e6e;overflow:hidden">
<svg style="left:3.5px;top:7px" width="12" height="12" viewBox="0 0 12 12" ><rect x=".5" y=".5" width="11" height="11" fill="#f8f8f8" stroke="#222" stroke-width="1.1"/><path d="M2.800 6h6.400" stroke="#000" stroke-width="1.300"/></svg>
<svg style="left:20px;top:2px" width="22" height="21" viewBox="0 0 22 21" ><rect x="1.5" y="4" width="15" height="16.500" fill="#f6f6f6"/><path d="M1.500 20.500h15.200V4" stroke="#a8a8a8" stroke-width="1" fill="none"/><path d="M1.500 4h15" stroke="#e0e0e0" stroke-width="1" fill="none"/><path d="M1 13.300 L4.700 9 L9 14.300 C11.500 8.500 15 3.800 21 .1 L21.700 1.500 C17 6 14.200 12.500 10.800 20.500 L7.600 20.700 C6 17.500 4 15.200 1 13.300Z" fill="#000"/></svg>
<svg style="left:40px;top:2px" width="19" height="19" viewBox="0 0 19 19" ><rect x="0.00" y="0.00" width="6.63" height="6.63" fill="#00c800"/><rect x="6.33" y="0.00" width="6.63" height="6.63" fill="#ff0000"/><rect x="12.66" y="0.00" width="6.63" height="6.63" fill="#0000ff"/><rect x="0.00" y="6.33" width="6.63" height="6.63" fill="#0000ff"/><rect x="6.33" y="6.33" width="6.63" height="6.63" fill="#00c800"/><rect x="12.66" y="6.33" width="6.63" height="6.63" fill="#ff0000"/><rect x="0.00" y="12.66" width="6.63" height="6.63" fill="#ff0000"/><rect x="6.33" y="12.66" width="6.63" height="6.63" fill="#0000ff"/><rect x="12.66" y="12.66" width="6.63" height="6.63" fill="#00c800"/></svg>
<div class="t b" style="left:63px;top:6px;letter-spacing:0.74px;">FG-GML-5741-34-46-DEM1A-20230929</div>
<svg style="left:3.5px;top:132px" width="12" height="12" viewBox="0 0 12 12" ><rect x=".5" y=".5" width="11" height="11" fill="#f8f8f8" stroke="#222" stroke-width="1.1"/><path d="M2.800 6h6.400" stroke="#000" stroke-width="1.300"/></svg>
<svg style="left:20px;top:127px" width="22" height="21" viewBox="0 0 22 21" ><rect x="1.5" y="4" width="15" height="16.500" fill="#f6f6f6"/><path d="M1.500 20.500h15.200V4" stroke="#a8a8a8" stroke-width="1" fill="none"/><path d="M1.500 4h15" stroke="#e0e0e0" stroke-width="1" fill="none"/><path d="M1 13.300 L4.700 9 L9 14.300 C11.500 8.500 15 3.800 21 .1 L21.700 1.500 C17 6 14.200 12.500 10.800 20.500 L7.600 20.700 C6 17.500 4 15.200 1 13.300Z" fill="#000"/></svg>
<svg style="left:40px;top:127px" width="19" height="19" viewBox="0 0 19 19" ><rect x="0.00" y="0.00" width="6.63" height="6.63" fill="#00c800"/><rect x="6.33" y="0.00" width="6.63" height="6.63" fill="#ff0000"/><rect x="12.66" y="0.00" width="6.63" height="6.63" fill="#0000ff"/><rect x="0.00" y="6.33" width="6.63" height="6.63" fill="#0000ff"/><rect x="6.33" y="6.33" width="6.63" height="6.63" fill="#00c800"/><rect x="12.66" y="6.33" width="6.63" height="6.63" fill="#ff0000"/><rect x="0.00" y="12.66" width="6.63" height="6.63" fill="#ff0000"/><rect x="6.33" y="12.66" width="6.63" height="6.63" fill="#0000ff"/><rect x="12.66" y="12.66" width="6.63" height="6.63" fill="#00c800"/></svg>
<div class="t " style="left:63px;top:131px;letter-spacing:0.85px;">FG-GML-5741-34-45-DEM1A-20230929</div>
<svg style="left:3.5px;top:257px" width="12" height="12" viewBox="0 0 12 12" ><rect x=".5" y=".5" width="11" height="11" fill="#f8f8f8" stroke="#222" stroke-width="1.1"/><path d="M2.800 6h6.400" stroke="#000" stroke-width="1.300"/></svg>
<svg style="left:20px;top:252px" width="22" height="21" viewBox="0 0 22 21" ><rect x="1.5" y="4" width="15" height="16.500" fill="#f6f6f6"/><path d="M1.500 20.500h15.200V4" stroke="#a8a8a8" stroke-width="1" fill="none"/><path d="M1.500 4h15" stroke="#e0e0e0" stroke-width="1" fill="none"/><path d="M1 13.300 L4.700 9 L9 14.300 C11.500 8.500 15 3.800 21 .1 L21.700 1.500 C17 6 14.200 12.500 10.800 20.500 L7.600 20.700 C6 17.500 4 15.200 1 13.300Z" fill="#000"/></svg>
<svg style="left:40px;top:252px" width="19" height="19" viewBox="0 0 19 19" ><rect x="0.00" y="0.00" width="6.63" height="6.63" fill="#00c800"/><rect x="6.33" y="0.00" width="6.63" height="6.63" fill="#ff0000"/><rect x="12.66" y="0.00" width="6.63" height="6.63" fill="#0000ff"/><rect x="0.00" y="6.33" width="6.63" height="6.63" fill="#0000ff"/><rect x="6.33" y="6.33" width="6.63" height="6.63" fill="#00c800"/><rect x="12.66" y="6.33" width="6.63" height="6.63" fill="#ff0000"/><rect x="0.00" y="12.66" width="6.63" height="6.63" fill="#ff0000"/><rect x="6.33" y="12.66" width="6.63" height="6.63" fill="#0000ff"/><rect x="12.66" y="12.66" width="6.63" height="6.63" fill="#00c800"/></svg>
<div class="t " style="left:63px;top:256px;letter-spacing:0.85px;">FG-GML-5741-34-44-DEM1A-20230929</div>
<svg style="left:89px;top:25px" width="27" height="20" viewBox="0 0 27 20"><path d="M0 2l6-1 6 2 5-2 4 3 1 5 4 2-1 4-5 1-3 4-4-1-3-5-4-3-3-5z" fill="#000"/><path d="M18 0h4" stroke="#000"/></svg>
<svg style="left:40px;top:150px" width="80" height="80"><defs><linearGradient id="g1" x1="1" y1="0" x2="0.3" y2="1"><stop offset="0" stop-color="#8a8a8a"/><stop offset=".5" stop-color="#a4a4a4"/><stop offset="1" stop-color="#b4b4b4"/></linearGradient></defs><rect width="80" height="80" fill="url(#g1)"/></svg>
<svg style="left:40px;top:275px" width="80" height="80"><defs><linearGradient id="g2" x1="1" y1="0" x2="0" y2="1"><stop offset="0" stop-color="#9c9c9c"/><stop offset=".6" stop-color="#858585"/><stop offset="1" stop-color="#6c6c6c"/></linearGradient></defs><rect width="80" height="80" fill="url(#g2)"/></svg>
</div>
<div class="abs trough" style="left:312px;top:108px;width:16px;height:331px;border:2px solid;border-color:#6e6e6e #fff #fff #6e6e6e;border-left:0"></div>
<svg style="left:312px;top:110px" width="14" height="14" viewBox="0 0 14 14" ><path d="M7.0 0 L14 14 L0 14Z" fill="#f0f0f0"/><path d="M7.0 0.5 L1 13" stroke="#fff" stroke-width="2" fill="none"/><path d="M7.0 0.5 L13 13 L0.5 13" stroke="#696969" stroke-width="2" fill="none"/></svg>
<div class="abs raised" style="left:312px;top:125px;width:14px;height:41px"></div>
<svg style="left:312px;top:423px" width="14" height="14" viewBox="0 0 14 14" ><path d="M0 0 L14 0 L7.0 14Z" fill="#f0f0f0"/><path d="M13.5 1 L0.5 1 L7.0 13.5" stroke="#fff" stroke-width="2" fill="none"/><path d="M7.0 13.5 L13 1" stroke="#696969" stroke-width="2" fill="none"/></svg>
<div class="abs trough" style="left:0px;top:441px;width:310px;height:17px;border:2px solid;border-color:#fff #fff #fff #6e6e6e;border-top:0"></div>
<svg style="left:3px;top:443px" width="14" height="12" viewBox="0 0 14 12" ><path d="M0 6.0 L14 0 L14 12Z" fill="#f0f0f0"/><path d="M0.5 6.0 L13 1" stroke="#fff" stroke-width="2" fill="none"/><path d="M0.5 6.0 L13 11 L13 0.5" stroke="#696969" stroke-width="2" fill="none"/></svg>
<div class="abs raised" style="left:18px;top:441px;width:110px;height:14px"></div>
<svg style="left:294px;top:442px" width="14" height="13" viewBox="0 0 14 13" ><path d="M14 6.5 L0 0 L0 13Z" fill="#f0f0f0"/><path d="M1 12.5 L1 1 L13.5 6.5" stroke="#fff" stroke-width="2" fill="none"/><path d="M13.5 6.5 L1 12" stroke="#696969" stroke-width="2" fill="none"/></svg>
<div class="t " style="left:4px;top:470px;letter-spacing:0.411px;">Transparency</div>
<div class="abs sunken trough" style="left:112px;top:463px;width:168px;height:33px"></div>
<div class="abs raised" style="left:115px;top:466px;width:37px;height:27px"></div>
<div class="abs" style="left:133px;top:468px;width:2px;height:23px;border-left:1px solid #808080;border-right:1px solid #fff"></div>
<div class="abs" style="left:278px;top:463px;width:51px;height:33px;background:#fff;border:2px solid;border-color:#808080 #fff #fff #808080"></div>
<div class="t" style="left:284px;top:470px;width:40px;text-align:right">0</div>
<div class="abs" style="left:1px;top:502px;width:328px;height:391px;background:#9b9b9b;overflow:hidden">
<svg style="left:0;top:0" width="328" height="391" viewBox="217 675 328 391"><defs><clipPath id="ovc"><rect x="217" y="785" width="327" height="173"/></clipPath></defs><g clip-path="url(#ovc)"><g transform="translate(-21.8 554.7) scale(0.4359 0.445)"><defs>
<filter id="ojag" filterUnits="userSpaceOnUse" x="560" y="460" width="700" height="320"><feTurbulence type="fractalNoise" baseFrequency="0.22" numOctaves="2" seed="7" result="n"/><feDisplacementMap in="SourceGraphic" in2="n" scale="6" xChannelSelector="R" yChannelSelector="G"/></filter>
<filter id="otex" filterUnits="userSpaceOnUse" x="560" y="460" width="700" height="320"><feTurbulence type="fractalNoise" baseFrequency="0.12" numOctaves="3" seed="3"/><feColorMatrix type="matrix" values="0 0 0 0 1  0 0 0 0 1  0 0 0 0 1  1.6 0 0 0 -.55"/></filter>
<filter id="otex2" filterUnits="userSpaceOnUse" x="560" y="460" width="700" height="320"><feTurbulence type="fractalNoise" baseFrequency="0.12" numOctaves="3" seed="11"/><feColorMatrix type="matrix" values="0 0 0 0 0  0 0 0 0 0  0 0 0 0 0  1.6 0 0 0 -.55"/></filter>
<clipPath id="otop"><rect x="560" y="514.8" width="700" height="300"/></clipPath>
<mask id="ocl" maskUnits="userSpaceOnUse" x="560" y="460" width="700" height="320"><g clip-path="url(#otop)"><polygon points="628.5,502.1 745.9,502.1 743.8,524.4 746.9,533.5 740.8,537.6 736.2,540.6 736.2,552.8 738.8,556.8 736.2,559.8 737.8,566.9 738.8,579.1 734.7,591.2 739.8,597.3 731.7,609.4 738.8,619.6 741.8,629.7 737.8,634.7 728.7,640.8 731.7,645.9 740.8,651.9 749.9,658.0 749.9,664.1 744.9,668.1 738.8,664.1 736.8,670.2 725.6,672.2 723.6,678.3 731.7,684.3 737.8,690.4 735.7,695.5 729.7,694.5 723.6,700.5 719.6,706.6 713.5,704.6 709.4,696.5 703.4,690.4 700.3,692.4 695.3,702.6 689.2,702.6 682.1,694.5 679.1,692.4 677.0,684.3 671.0,684.3 667.9,674.2 658.8,668.1 652.8,668.1 650.7,673.2 643.6,672.2 640.6,664.1 634.5,658.0 633.5,649.9 628.5,639.8 631.5,629.7 626.4,619.6 623.4,611.5 627.4,605.4 629.5,597.3 623.4,591.2 622.4,579.1 625.4,571.0 620.4,558.8 623.4,548.7 620.4,540.6 622.4,530.5 626.4,522.4" fill="#fff" filter="url(#ojag)"/></g></mask>
<mask id="ocr" maskUnits="userSpaceOnUse" x="560" y="460" width="700" height="320"><g clip-path="url(#otop)"><polygon points="942.6,503.2 1166.1,503.2 1168.9,520.7 1168.9,526.2 1161.2,531.7 1160.1,537.1 1164.5,542.6 1161.2,547.0 1148.1,552.5 1139.3,560.2 1145.9,566.8 1152.5,573.3 1155.7,582.1 1161.2,593.1 1166.7,599.6 1167.8,608.4 1165.6,615.0 1157.9,619.4 1155.7,623.8 1161.2,630.4 1167.8,639.1 1174.4,641.3 1183.2,643.5 1191.9,646.8 1190.8,652.3 1183.2,658.9 1172.2,669.8 1170.0,676.4 1161.2,680.8 1152.5,685.2 1148.1,689.6 1141.5,695.0 1130.5,700.5 1125.0,707.1 1127.2,713.7 1123.9,722.5 1118.5,727.9 1106.4,726.8 1097.6,720.3 1093.2,713.7 1095.4,703.8 1088.9,698.3 1080.1,693.9 1073.5,685.2 1068.0,676.4 1064.7,665.4 1060.4,656.7 1051.6,653.4 1042.8,647.9 1029.6,641.3 1020.9,632.5 1015.8,622.7 1007.7,620.5 996.8,615.0 990.2,608.4 982.5,604.0 984.7,597.5 977.0,592.0 969.3,586.5 971.5,577.7 967.1,571.1 952.9,562.4 941.9,553.6 940.8,542.6 943.7,533.9" fill="#fff" filter="url(#ojag)"/></g></mask>
<filter id="ob0" filterUnits="userSpaceOnUse" x="560" y="460" width="700" height="320"><feGaussianBlur stdDeviation="0.7"/></filter>
<filter id="ob1" filterUnits="userSpaceOnUse" x="560" y="460" width="700" height="320"><feGaussianBlur stdDeviation="2.2"/></filter>
<filter id="ob2" filterUnits="userSpaceOnUse" x="560" y="460" width="700" height="320"><feGaussianBlur stdDeviation="6"/></filter>
<clipPath id="otls"><rect x="610.2" y="510.2" width="34.8" height="182.2"/></clipPath>
<clipPath id="otrs"><rect x="736.8" y="510.2" width="19.2" height="161.9"/></clipPath>
<clipPath id="otbs"><rect x="610.2" y="671.2" width="145.7" height="41.5"/></clipPath>
<clipPath id="otcu"><rect x="645.1" y="514.7" width="91.7" height="79.4"/></clipPath>
<clipPath id="otcl"><rect x="645.1" y="594.0" width="91.7" height="77.1"/></clipPath>
<clipPath id="otA"><rect x="933.2" y="515.2" width="82.7" height="77.9"/></clipPath>
<clipPath id="otE"><rect x="933.2" y="593.1" width="82.7" height="50.4"/></clipPath>
<clipPath id="otB"><rect x="1015.8" y="515.2" width="93.9" height="77.9"/></clipPath>
<clipPath id="otD"><rect x="1015.8" y="593.1" width="93.9" height="78.5"/></clipPath>
<clipPath id="otC"><rect x="1109.7" y="515.2" width="86.6" height="156.4"/></clipPath>
<clipPath id="otF"><rect x="1015.8" y="671.6" width="180.5" height="59.6"/></clipPath></defs>
<g mask="url(#ocl)">
<rect x="610.2" y="510.2" width="145.7" height="202.4" fill="#a0a0a0"/>
<g clip-path="url(#otls)">
<rect x="608.2" y="508.2" width="38.8" height="186.2" fill="#8e8e8e"/>
<g filter="url(#ob2)"><path d="M640.6 571.0 L641.8 591.2 L641.0 615.5 L641.8 664.1" stroke="#fff" stroke-width="10" fill="none" opacity="0.95" stroke-linecap="round" stroke-linejoin="round"/><path d="M635.5 603.4 L638.6 631.7 L640.6 651.9" stroke="#f0f0f0" stroke-width="10" fill="none" opacity="0.8" stroke-linecap="round" stroke-linejoin="round"/><ellipse cx="637.6" cy="530.5" rx="8.1" ry="14.2" fill="#b0b0b0" opacity="0.8"/><ellipse cx="633.5" cy="579.1" rx="6.1" ry="12.1" fill="#c4c4c4" opacity="0.7"/></g>
<g filter="url(#ob1)"><path d="M643.0 603.4 L643.0 668.1" stroke="#fff" stroke-width="3" fill="none" opacity="0.8" stroke-linecap="round" stroke-linejoin="round"/></g>
</g>
<g clip-path="url(#otrs)">
<rect x="734.8" y="508.2" width="23.2" height="165.9" fill="#a8a8a8"/>
<g filter="url(#ob1)"><ellipse cx="744.3" cy="661.1" rx="5.3" ry="5.3" fill="#e8e8e8" opacity="0.95"/><ellipse cx="740.8" cy="523.4" rx="3.6" ry="9.1" fill="#e0e0e0" opacity="0.95"/><ellipse cx="738.8" cy="629.7" rx="2.8" ry="4.0" fill="#d0d0d0" opacity="0.8"/></g>
</g>
<g clip-path="url(#otbs)">
<rect x="608.2" y="669.2" width="149.7" height="45.5" fill="#a8a8a8"/>
<g filter="url(#ob2)"><ellipse cx="695.3" cy="675.2" rx="24.3" ry="6.5" fill="#fff" opacity="1"/><ellipse cx="685.1" cy="684.3" rx="10.1" ry="8.1" fill="#f0f0f0" opacity="0.8"/><ellipse cx="719.6" cy="686.4" rx="8.1" ry="6.1" fill="#d8d8d8" opacity="0.7"/></g>
<g filter="url(#ob1)"><ellipse cx="695.3" cy="673.2" rx="18.2" ry="2.8" fill="#fff" opacity="0.9"/></g>
</g>
<g clip-path="url(#otcu)">
<rect x="643.1" y="512.7" width="95.7" height="83.4" fill="#606060"/>
<g filter="url(#ob2)"><ellipse cx="723.6" cy="550.7" rx="16.2" ry="46.6" fill="#343434" opacity="0.9"/><ellipse cx="654.8" cy="562.9" rx="10.1" ry="32.4" fill="#4c4c4c" opacity="0.8"/><ellipse cx="656.8" cy="520.4" rx="14.2" ry="12.1" fill="#7c7c7c" opacity="0.7"/><path d="M698.3 512.3 L692.2 530.5 L686.8 544.7 L687.6 562.9 L685.5 579.1 L684.1 595.3" stroke="#c8c8c8" stroke-width="38" fill="none" opacity="0.7" stroke-linecap="round" stroke-linejoin="round"/><path d="M686.8 538.6 L671.0 556.8" stroke="#808080" stroke-width="12" fill="none" opacity="0.5" stroke-linecap="round" stroke-linejoin="round"/><path d="M687.2 566.9 L705.4 550.7 L719.6 530.5" stroke="#707070" stroke-width="10" fill="none" opacity="0.4" stroke-linecap="round" stroke-linejoin="round"/></g>
<g filter="url(#ob1)"><path d="M698.3 512.3 L692.2 530.5 L686.8 544.7 L687.6 562.9 L685.5 579.1 L684.1 595.3" stroke="#fff" stroke-width="9" fill="none" opacity="0.9" stroke-linecap="round" stroke-linejoin="round"/><ellipse cx="688.2" cy="539.6" rx="4.5" ry="6.1" fill="#fff" opacity="0.7"/></g>
</g>
<g clip-path="url(#otcl)">
<rect x="643.1" y="592.0" width="95.7" height="81.1" fill="#545454"/>
<g filter="url(#ob2)"><ellipse cx="721.6" cy="619.6" rx="16.2" ry="24.3" fill="#3a3a3a" opacity="0.8"/><ellipse cx="656.8" cy="654.0" rx="12.1" ry="18.2" fill="#2a2a2a" opacity="0.9"/><ellipse cx="707.4" cy="664.1" rx="30.4" ry="8.1" fill="#3c3c3c" opacity="0.8"/><path d="M684.1 592.2 L686.8 607.4 L689.6 621.6 L688.2 639.8 L685.1 656.0" stroke="#c0c0c0" stroke-width="36" fill="none" opacity="0.6" stroke-linecap="round" stroke-linejoin="round"/><path d="M687.2 611.5 L671.0 619.6 L656.8 623.6" stroke="#787878" stroke-width="12" fill="none" opacity="0.45" stroke-linecap="round" stroke-linejoin="round"/><path d="M689.2 631.7 L707.4 639.8 L723.6 647.9" stroke="#707070" stroke-width="12" fill="none" opacity="0.4" stroke-linecap="round" stroke-linejoin="round"/></g>
<g filter="url(#ob1)"><path d="M684.1 592.2 L686.8 607.4 L689.6 621.6 L688.8 631.7" stroke="#fff" stroke-width="9" fill="none" opacity="0.8" stroke-linecap="round" stroke-linejoin="round"/></g>
</g>
<path d="M645.1 594.0 H736.8" stroke="#9a9a9a" stroke-width="1" opacity=".5"/>
<path d="M644.0 514.7 V670.2" stroke="#fff" stroke-width="1.3" opacity=".85"/>
<rect x="560" y="460" width="700" height="320" filter="url(#otex)" opacity=".15"/>
<rect x="560" y="460" width="700" height="320" filter="url(#otex2)" opacity=".2"/>
<path d="M745.9 514.7 L743.8 524.4 L746.9 533.5 L740.8 537.6 L736.2 540.6 L736.2 552.8 L738.8 556.8 L736.2 559.8 L737.8 566.9 L738.8 579.1 L734.7 591.2 L739.8 597.3 L731.7 609.4 L738.8 619.6 L741.8 629.7 L737.8 634.7 L728.7 640.8 L731.7 645.9 L740.8 651.9 L749.9 658.0 L749.9 664.1 L744.9 668.1 L738.8 664.1 L736.8 670.2 L725.6 672.2 L723.6 678.3 L731.7 684.3 L737.8 690.4 L735.7 695.5 L729.7 694.5 L723.6 700.5 L719.6 706.6 L713.5 704.6 L709.4 696.5 L703.4 690.4 L700.3 692.4 L695.3 702.6 L689.2 702.6 L682.1 694.5 L679.1 692.4 L677.0 684.3 L671.0 684.3 L667.9 674.2 L658.8 668.1 L652.8 668.1 L650.7 673.2 L643.6 672.2 L640.6 664.1 L634.5 658.0 L633.5 649.9 L628.5 639.8 L631.5 629.7 L626.4 619.6 L623.4 611.5 L627.4 605.4 L629.5 597.3 L623.4 591.2 L622.4 579.1 L625.4 571.0 L620.4 558.8 L623.4 548.7 L620.4 540.6 L622.4 530.5 L626.4 522.4 L628.5 514.7" stroke="#000" stroke-width="6" fill="none" opacity=".45" filter="url(#ob1)"/>
<path d="M745.9 514.7 L743.8 524.4 L746.9 533.5 L740.8 537.6 L736.2 540.6 L736.2 552.8 L738.8 556.8 L736.2 559.8 L737.8 566.9 L738.8 579.1 L734.7 591.2 L739.8 597.3 L731.7 609.4 L738.8 619.6 L741.8 629.7 L737.8 634.7 L728.7 640.8 L731.7 645.9 L740.8 651.9 L749.9 658.0 L749.9 664.1 L744.9 668.1 L738.8 664.1 L736.8 670.2 L725.6 672.2 L723.6 678.3 L731.7 684.3 L737.8 690.4 L735.7 695.5 L729.7 694.5 L723.6 700.5 L719.6 706.6 L713.5 704.6 L709.4 696.5 L703.4 690.4 L700.3 692.4 L695.3 702.6 L689.2 702.6 L682.1 694.5 L679.1 692.4 L677.0 684.3 L671.0 684.3 L667.9 674.2 L658.8 668.1 L652.8 668.1 L650.7 673.2 L643.6 672.2 L640.6 664.1 L634.5 658.0 L633.5 649.9 L628.5 639.8 L631.5 629.7 L626.4 619.6 L623.4 611.5 L627.4 605.4 L629.5 597.3 L623.4 591.2 L622.4 579.1 L625.4 571.0 L620.4 558.8 L623.4 548.7 L620.4 540.6 L622.4 530.5 L626.4 522.4 L628.5 514.7" stroke="#000" stroke-width="2.4" fill="none" opacity=".8" filter="url(#ojag)"/>
</g>
<g mask="url(#ocr)">
<rect x="937.5" y="511.9" width="263.2" height="219.3" fill="#707070"/>
<g clip-path="url(#otA)">
<rect x="931.2" y="513.2" width="86.7" height="81.9" fill="#585858"/>
<g filter="url(#ob2)"><path d="M933.2 515.9 L1015.8 515.9" stroke="#0c0c0c" stroke-width="22" fill="none" opacity="0.9" stroke-linecap="round" stroke-linejoin="round"/><path d="M944.1 545.9 L963.9 552.5 L985.8 552.5 L1015.8 553.6" stroke="#d0d0d0" stroke-width="22" fill="none" opacity="0.85" stroke-linecap="round" stroke-linejoin="round"/><path d="M963.9 553.6 L979.2 564.6 L985.8 573.3" stroke="#a0a0a0" stroke-width="16" fill="none" opacity="0.6" stroke-linecap="round" stroke-linejoin="round"/><path d="M985.8 551.4 L994.6 536.1 L1007.7 527.3" stroke="#888" stroke-width="12" fill="none" opacity="0.5" stroke-linecap="round" stroke-linejoin="round"/><ellipse cx="1005.5" cy="584.3" rx="17.5" ry="12.1" fill="#0c0c0c" opacity="0.9"/></g>
<g filter="url(#ob1)"><path d="M950.7 548.1 L970.4 554.0 L992.4 552.7 L1015.8 554.0" stroke="#e8e8e8" stroke-width="8" fill="none" opacity="0.4" stroke-linecap="round" stroke-linejoin="round"/></g>
</g>
<g clip-path="url(#otE)">
<rect x="931.2" y="591.1" width="86.7" height="54.4" fill="#8c8c8c"/>
<g filter="url(#ob2)"><ellipse cx="1008.8" cy="605.1" rx="12.1" ry="9.9" fill="#fff" opacity="1"/></g>
<g filter="url(#ob1)"><ellipse cx="1011.0" cy="605.1" rx="5.5" ry="6.6" fill="#fff" opacity="0.9"/></g>
</g>
<g clip-path="url(#otB)">
<rect x="1013.8" y="513.2" width="97.9" height="81.9" fill="#484848"/>
<g filter="url(#ob2)"><ellipse cx="1027.5" cy="579.9" rx="13.2" ry="13.2" fill="#141414" opacity="0.9"/><ellipse cx="1102.0" cy="553.6" rx="13.2" ry="24.1" fill="#000" opacity="0.95"/><ellipse cx="1086.7" cy="522.9" rx="21.9" ry="6.6" fill="#2c2c2c" opacity="0.7"/><path d="M1046.1 515.2 L1048.9 533.9 L1053.8 551.4 L1069.1 566.8 L1082.3 582.1 L1093.2 595.3" stroke="#c0c0c0" stroke-width="40" fill="none" opacity="0.7" stroke-linecap="round" stroke-linejoin="round"/><path d="M1053.8 552.5 L1038.4 552.5 L1015.8 554.0" stroke="#a8a8a8" stroke-width="18" fill="none" opacity="0.6" stroke-linecap="round" stroke-linejoin="round"/><path d="M1049.4 533.9 L1064.7 531.7 L1077.9 537.1" stroke="#787878" stroke-width="12" fill="none" opacity="0.5" stroke-linecap="round" stroke-linejoin="round"/><path d="M1069.1 566.8 L1056.0 575.5 L1045.0 586.5" stroke="#6c6c6c" stroke-width="12" fill="none" opacity="0.5" stroke-linecap="round" stroke-linejoin="round"/><path d="M1082.3 582.1 L1093.2 573.3 L1099.8 577.7" stroke="#6c6c6c" stroke-width="10" fill="none" opacity="0.4" stroke-linecap="round" stroke-linejoin="round"/></g>
<g filter="url(#ob1)"><path d="M1046.1 515.2 L1048.9 533.9 L1053.8 551.4 L1069.1 566.8 L1082.3 582.1 L1093.2 595.3" stroke="#f4f4f4" stroke-width="9" fill="none" opacity="0.8" stroke-linecap="round" stroke-linejoin="round"/><ellipse cx="1046.1" cy="518.1" rx="6.6" ry="4.4" fill="#fff" opacity="0.95"/></g>
</g>
<g clip-path="url(#otD)">
<rect x="1013.8" y="591.1" width="97.9" height="82.5" fill="#555"/>
<g filter="url(#ob2)"><ellipse cx="1042.8" cy="630.4" rx="19.7" ry="15.4" fill="#383838" opacity="0.7"/><ellipse cx="1086.7" cy="665.4" rx="15.4" ry="6.6" fill="#2c2c2c" opacity="0.7"/><path d="M1086.7 592.0 L1095.4 612.8 L1104.2 634.7 L1110.8 658.9" stroke="#b4b4b4" stroke-width="24" fill="none" opacity="0.7" stroke-linecap="round" stroke-linejoin="round"/><path d="M1060.4 594.8 L1086.7 593.9 L1109.7 595.7" stroke="#a0a0a0" stroke-width="12" fill="none" opacity="0.6" stroke-linecap="round" stroke-linejoin="round"/><path d="M1095.4 612.8 L1073.5 612.8 L1051.6 606.2" stroke="#7c7c7c" stroke-width="14" fill="none" opacity="0.5" stroke-linecap="round" stroke-linejoin="round"/><path d="M1104.2 634.7 L1086.7 641.3 L1071.3 652.3" stroke="#767676" stroke-width="14" fill="none" opacity="0.5" stroke-linecap="round" stroke-linejoin="round"/></g>
<g filter="url(#ob1)"><path d="M1087.8 593.1 L1096.5 612.8 L1105.3 634.7 L1110.8 658.9" stroke="#d8d8d8" stroke-width="8" fill="none" opacity="0.4" stroke-linecap="round" stroke-linejoin="round"/></g>
</g>
<g clip-path="url(#otC)">
<rect x="1107.7" y="513.2" width="90.6" height="160.4" fill="#545454"/>
<g filter="url(#ob2)"><path d="M1109.7 515.9 L1167.8 515.9" stroke="#202020" stroke-width="22" fill="none" opacity="0.85" stroke-linecap="round" stroke-linejoin="round"/><path d="M1110.8 555.8 L1130.5 566.8 L1148.1 584.3 L1156.8 604.0" stroke="#a8a8a8" stroke-width="16" fill="none" opacity="0.6" stroke-linecap="round" stroke-linejoin="round"/><path d="M1113.0 597.5 L1130.5 604.0 L1148.1 612.8 L1159.0 623.8" stroke="#a4a4a4" stroke-width="16" fill="none" opacity="0.55" stroke-linecap="round" stroke-linejoin="round"/><path d="M1113.0 657.8 L1130.5 647.9 L1152.5 646.8 L1178.8 650.1" stroke="#b0b0b0" stroke-width="20" fill="none" opacity="0.7" stroke-linecap="round" stroke-linejoin="round"/><path d="M1110.8 630.4 L1123.9 626.0 L1139.3 630.4" stroke="#8c8c8c" stroke-width="14" fill="none" opacity="0.5" stroke-linecap="round" stroke-linejoin="round"/><path d="M1130.5 533.9 L1139.3 547.0 L1152.5 544.8" stroke="#808080" stroke-width="12" fill="none" opacity="0.45" stroke-linecap="round" stroke-linejoin="round"/></g>
<g filter="url(#ob1)"><ellipse cx="1113.6" cy="658.9" rx="6.1" ry="7.9" fill="#fff" opacity="0.95"/></g>
</g>
<g clip-path="url(#otF)">
<rect x="1013.8" y="669.6" width="184.5" height="63.6" fill="#555"/>
<g filter="url(#ob2)"><ellipse cx="1106.4" cy="676.0" rx="17.5" ry="7.9" fill="#fff" opacity="1"/><path d="M1106.4 675.3 L1108.6 691.8 L1110.8 707.1" stroke="#909090" stroke-width="20" fill="none" opacity="0.6" stroke-linecap="round" stroke-linejoin="round"/><path d="M1106.4 675.3 L1128.3 680.8 L1152.5 678.6" stroke="#a0a0a0" stroke-width="16" fill="none" opacity="0.6" stroke-linecap="round" stroke-linejoin="round"/><path d="M1106.4 675.3 L1086.7 683.0" stroke="#a0a0a0" stroke-width="14" fill="none" opacity="0.6" stroke-linecap="round" stroke-linejoin="round"/><ellipse cx="1110.8" cy="720.3" rx="13.2" ry="8.8" fill="#141414" opacity="0.9"/></g>
<g filter="url(#ob1)"><ellipse cx="1106.4" cy="673.8" rx="8.8" ry="2.6" fill="#fff" opacity="0.9"/></g>
</g>
<rect x="560" y="460" width="700" height="320" filter="url(#otex)" opacity=".15"/>
<rect x="560" y="460" width="700" height="320" filter="url(#otex2)" opacity=".2"/>
<path d="M1166.1 515.2 L1168.9 520.7 L1168.9 526.2 L1161.2 531.7 L1160.1 537.1 L1164.5 542.6 L1161.2 547.0 L1148.1 552.5 L1139.3 560.2 L1145.9 566.8 L1152.5 573.3 L1155.7 582.1 L1161.2 593.1 L1166.7 599.6 L1167.8 608.4 L1165.6 615.0 L1157.9 619.4 L1155.7 623.8 L1161.2 630.4 L1167.8 639.1 L1174.4 641.3 L1183.2 643.5 L1191.9 646.8 L1190.8 652.3 L1183.2 658.9 L1172.2 669.8 L1170.0 676.4 L1161.2 680.8 L1152.5 685.2 L1148.1 689.6 L1141.5 695.0 L1130.5 700.5 L1125.0 707.1 L1127.2 713.7 L1123.9 722.5 L1118.5 727.9 L1106.4 726.8 L1097.6 720.3 L1093.2 713.7 L1095.4 703.8 L1088.9 698.3 L1080.1 693.9 L1073.5 685.2 L1068.0 676.4 L1064.7 665.4 L1060.4 656.7 L1051.6 653.4 L1042.8 647.9 L1029.6 641.3 L1020.9 632.5 L1015.8 622.7 L1007.7 620.5 L996.8 615.0 L990.2 608.4 L982.5 604.0 L984.7 597.5 L977.0 592.0 L969.3 586.5 L971.5 577.7 L967.1 571.1 L952.9 562.4 L941.9 553.6 L940.8 542.6 L943.7 533.9 L942.6 515.2" stroke="#000" stroke-width="7" fill="none" opacity=".5" filter="url(#ob1)"/>
<path d="M1166.1 515.2 L1168.9 520.7 L1168.9 526.2 L1161.2 531.7 L1160.1 537.1 L1164.5 542.6 L1161.2 547.0 L1148.1 552.5 L1139.3 560.2 L1145.9 566.8 L1152.5 573.3 L1155.7 582.1 L1161.2 593.1 L1166.7 599.6 L1167.8 608.4 L1165.6 615.0 L1157.9 619.4 L1155.7 623.8 L1161.2 630.4 L1167.8 639.1 L1174.4 641.3 L1183.2 643.5 L1191.9 646.8 L1190.8 652.3 L1183.2 658.9 L1172.2 669.8 L1170.0 676.4 L1161.2 680.8 L1152.5 685.2 L1148.1 689.6 L1141.5 695.0 L1130.5 700.5 L1125.0 707.1 L1127.2 713.7 L1123.9 722.5 L1118.5 727.9 L1106.4 726.8 L1097.6 720.3 L1093.2 713.7 L1095.4 703.8 L1088.9 698.3 L1080.1 693.9 L1073.5 685.2 L1068.0 676.4 L1064.7 665.4 L1060.4 656.7 L1051.6 653.4 L1042.8 647.9 L1029.6 641.3 L1020.9 632.5 L1015.8 622.7 L1007.7 620.5 L996.8 615.0 L990.2 608.4 L982.5 604.0 L984.7 597.5 L977.0 592.0 L969.3 586.5 L971.5 577.7 L967.1 571.1 L952.9 562.4 L941.9 553.6 L940.8 542.6 L943.7 533.9 L942.6 515.2" stroke="#000" stroke-width="2.4" fill="none" opacity=".8" filter="url(#ojag)"/>
</g></g></g><g shape-rendering="crispEdges" stroke="#ffff00" stroke-width="1" fill="none"><rect x="217.5" y="784.5" width="327" height="173"/><path d="M381.5 776v8M381.5 958v8M215 871.5h3M544 871.5h3"/></g></svg>
</div>
<div class="t " style="left:3px;top:905px;letter-spacing:0.012px;">Zoom</div>
<div class="abs sunken" style="left:49px;top:898px;width:135px;height:34px"></div>
<div class="t " style="left:55px;top:905px;letter-spacing:0.527px;">View Scale</div>
<div class="abs raised" style="left:161px;top:906px;width:20px;height:18px"></div><svg style="left:165px;top:912px" width="12" height="7" viewBox="0 0 12 7" ><path d="M0 0h11l-5.5 6.5z" fill="#000"/></svg>
<div class="abs" style="left:184px;top:898px;width:120px;height:34px;background:#fff;border:2px solid;border-color:#808080 #fff #fff #808080"></div>
<div class="t" style="left:199px;top:905px;width:100px;text-align:right;letter-spacing:0.45px">1:75050</div>
<div class="abs raised" style="left:305px;top:906px;width:20px;height:18px"></div><svg style="left:309px;top:912px" width="12" height="7" viewBox="0 0 12 7" ><path d="M0 0h11l-5.5 6.5z" fill="#000"/></svg>
<div class="hl" style="left:0;width:329px;top:936px"></div>
<div class="abs" style="left:3px;top:942px;width:25px;height:25px;background:#f0f0f0;border:1px solid;border-color:#808080 #fff #fff #808080"></div>
<svg style="left:6px;top:945px" width="20" height="19" viewBox="0 0 20 19" ><rect x="1.500" y="1.500" width="18" height="17" fill="#808080"/><rect width="18" height="17" fill="#e8e8e8"/><rect x="1" y="1.500" width="5" height="3" fill="#0000ff"/><rect x="1" y="6.800" width="5" height="3" fill="#00a000"/><rect x="1" y="12" width="5" height="3" fill="#ff0000"/><path d="M7.500 3.800h9.500M7.500 9h9.500M7.500 14.300h9.500" stroke="#000" stroke-width="1.800" stroke-dasharray="2 .800"/><path d="M7.500 5h9.500M7.500 10.200h9.500M7.500 15.500h9.500" stroke="#505050" stroke-width="1"/></svg>
<div class="abs" style="left:31px;top:942px;width:25px;height:25px;background:#f0f0f0;border:1px solid;border-color:#808080 #fff #fff #808080"></div>
<svg style="left:34px;top:944px" width="21" height="21" viewBox="0 0 21 21" ><rect x=".500" y=".800" width="15.500" height="13.400" fill="#ffffa8" stroke="#303030" stroke-width="1"/><rect x="5" y="4.800" width="14.500" height="15" fill="#18a0f0" stroke="#202020" stroke-width="1"/><rect x="5.500" y="5.300" width="10" height="8.400" fill="#b0f0a8"/><rect x=".500" y="18.500" width="1.200" height="1.200" fill="#303030"/></svg>
<svg style="left:62px;top:943px" width="21" height="21" viewBox="0 0 21 21" ><path d="M13 13l6.5 6.5" stroke="#108888" stroke-width="3" stroke-linecap="round"/><path d="M13 13l6 6" stroke="#004848" stroke-width="1"/><circle cx="8.5" cy="8.5" r="7.3" fill="#b8ffff" stroke="#003838" stroke-width="1.6"/><path d="M3.500 8a5 5 0 0 1 4-4.500" stroke="#fff" stroke-width="1.500" fill="none"/></svg>
<div class="abs" style="left:89px;top:942px;width:25px;height:25px;background:#f0f0f0;border:1px solid;border-color:#808080 #fff #fff #808080"></div>
<svg style="left:91px;top:944px" width="21" height="20" viewBox="0 0 21 20" ><rect x="4" y="1" width="16" height="16" fill="#10c020" stroke="#404040" stroke-width="1"/><path d="M3.500 1.500h17" stroke="#800000" stroke-width="2.200"/><path d="M7 4l5 2 4-2 3 5-4 4-5-2z" fill="#087818"/><path d="M13 9h6v6h-8z" fill="#1838e8"/><path d="M9 7l3 1 1 3" stroke="#d04020" stroke-width="1.200" fill="none"/><rect x=".500" y="9.500" width="8.500" height="9" fill="#10c020" stroke="#404040" stroke-width="1"/><path d="M0 9.500h9.500" stroke="#800000" stroke-width="1.800"/><rect x="2" y="13" width="4" height="4" fill="#1838e8"/><path d="M3 12l3 3" stroke="#087818" stroke-width="1.500"/></svg>
<svg style="left:120px;top:943px" width="21" height="21" viewBox="0 0 21 21" ><path d="M13 13l6.5 6.5" stroke="#108888" stroke-width="3" stroke-linecap="round"/><path d="M13 13l6 6" stroke="#004848" stroke-width="1"/><circle cx="8.5" cy="8.5" r="7.3" fill="#d8ffff" stroke="#003838" stroke-width="1.6"/><rect x="9" y="0" width="11" height="8" fill="#20c020"/><path d="M13 0h7v5z" fill="#2020e0"/><path d="M9 3l3-2 3 3" stroke="#a040c0" fill="none"/><path d="M5 6v6h8" stroke="#8080c0" stroke-width="1.200" fill="none"/></svg>
<div class="abs" style="left:146px;top:942px;width:25px;height:25px;background:#f0f0f0;border:1px solid;border-color:#808080 #fff #fff #808080"></div>
<div class="abs" style="left:149px;top:945px;width:20px;height:19px;background:#c8c8c8"></div>
<svg style="left:149px;top:944px" width="21" height="21" viewBox="0 0 21 21" ><path d="M13 13l6.5 6.5" stroke="#108888" stroke-width="3" stroke-linecap="round"/><path d="M13 13l6 6" stroke="#004848" stroke-width="1"/><circle cx="8.5" cy="8.5" r="7.3" fill="#d8ffff" stroke="#003838" stroke-width="1.6"/><path d="M8.500 4.500v8M4.500 8.500h8" stroke="#000" stroke-width="3.200"/></svg>
<svg style="left:320px;top:949px" width="8" height="12" viewBox="0 0 8 12" ><path d="M0 6l7-6v12z" fill="#000"/></svg>
<div class="abs" style="left:334px;top:108px;width:747px;height:861px;background:#aaffff;overflow:hidden">
<svg style="left:0;top:0" width="747" height="861" viewBox="550 281 747 861"><defs>
<filter id="mjag" filterUnits="userSpaceOnUse" x="560" y="460" width="700" height="320"><feTurbulence type="fractalNoise" baseFrequency="0.22" numOctaves="2" seed="7" result="n"/><feDisplacementMap in="SourceGraphic" in2="n" scale="6" xChannelSelector="R" yChannelSelector="G"/></filter>
<filter id="mtex" filterUnits="userSpaceOnUse" x="560" y="460" width="700" height="320"><feTurbulence type="fractalNoise" baseFrequency="0.12" numOctaves="3" seed="3"/><feColorMatrix type="matrix" values="0 0 0 0 1  0 0 0 0 1  0 0 0 0 1  1.6 0 0 0 -.55"/></filter>
<filter id="mtex2" filterUnits="userSpaceOnUse" x="560" y="460" width="700" height="320"><feTurbulence type="fractalNoise" baseFrequency="0.12" numOctaves="3" seed="11"/><feColorMatrix type="matrix" values="0 0 0 0 0  0 0 0 0 0  0 0 0 0 0  1.6 0 0 0 -.55"/></filter>
<clipPath id="mtop"><rect x="560" y="514.8" width="700" height="300"/></clipPath>
<mask id="mcl" maskUnits="userSpaceOnUse" x="560" y="460" width="700" height="320"><g clip-path="url(#mtop)"><polygon points="628.5,502.1 745.9,502.1 743.8,524.4 746.9,533.5 740.8,537.6 736.2,540.6 736.2,552.8 738.8,556.8 736.2,559.8 737.8,566.9 738.8,579.1 734.7,591.2 739.8,597.3 731.7,609.4 738.8,619.6 741.8,629.7 737.8,634.7 728.7,640.8 731.7,645.9 740.8,651.9 749.9,658.0 749.9,664.1 744.9,668.1 738.8,664.1 736.8,670.2 725.6,672.2 723.6,678.3 731.7,684.3 737.8,690.4 735.7,695.5 729.7,694.5 723.6,700.5 719.6,706.6 713.5,704.6 709.4,696.5 703.4,690.4 700.3,692.4 695.3,702.6 689.2,702.6 682.1,694.5 679.1,692.4 677.0,684.3 671.0,684.3 667.9,674.2 658.8,668.1 652.8,668.1 650.7,673.2 643.6,672.2 640.6,664.1 634.5,658.0 633.5,649.9 628.5,639.8 631.5,629.7 626.4,619.6 623.4,611.5 627.4,605.4 629.5,597.3 623.4,591.2 622.4,579.1 625.4,571.0 620.4,558.8 623.4,548.7 620.4,540.6 622.4,530.5 626.4,522.4" fill="#fff" filter="url(#mjag)"/></g></mask>
<mask id="mcr" maskUnits="userSpaceOnUse" x="560" y="460" width="700" height="320"><g clip-path="url(#mtop)"><polygon points="942.6,503.2 1166.1,503.2 1168.9,520.7 1168.9,526.2 1161.2,531.7 1160.1,537.1 1164.5,542.6 1161.2,547.0 1148.1,552.5 1139.3,560.2 1145.9,566.8 1152.5,573.3 1155.7,582.1 1161.2,593.1 1166.7,599.6 1167.8,608.4 1165.6,615.0 1157.9,619.4 1155.7,623.8 1161.2,630.4 1167.8,639.1 1174.4,641.3 1183.2,643.5 1191.9,646.8 1190.8,652.3 1183.2,658.9 1172.2,669.8 1170.0,676.4 1161.2,680.8 1152.5,685.2 1148.1,689.6 1141.5,695.0 1130.5,700.5 1125.0,707.1 1127.2,713.7 1123.9,722.5 1118.5,727.9 1106.4,726.8 1097.6,720.3 1093.2,713.7 1095.4,703.8 1088.9,698.3 1080.1,693.9 1073.5,685.2 1068.0,676.4 1064.7,665.4 1060.4,656.7 1051.6,653.4 1042.8,647.9 1029.6,641.3 1020.9,632.5 1015.8,622.7 1007.7,620.5 996.8,615.0 990.2,608.4 982.5,604.0 984.7,597.5 977.0,592.0 969.3,586.5 971.5,577.7 967.1,571.1 952.9,562.4 941.9,553.6 940.8,542.6 943.7,533.9" fill="#fff" filter="url(#mjag)"/></g></mask>
<filter id="mb0" filterUnits="userSpaceOnUse" x="560" y="460" width="700" height="320"><feGaussianBlur stdDeviation="0.7"/></filter>
<filter id="mb1" filterUnits="userSpaceOnUse" x="560" y="460" width="700" height="320"><feGaussianBlur stdDeviation="2.2"/></filter>
<filter id="mb2" filterUnits="userSpaceOnUse" x="560" y="460" width="700" height="320"><feGaussianBlur stdDeviation="6"/></filter>
<clipPath id="mtls"><rect x="610.2" y="510.2" width="34.8" height="182.2"/></clipPath>
<clipPath id="mtrs"><rect x="736.8" y="510.2" width="19.2" height="161.9"/></clipPath>
<clipPath id="mtbs"><rect x="610.2" y="671.2" width="145.7" height="41.5"/></clipPath>
<clipPath id="mtcu"><rect x="645.1" y="514.7" width="91.7" height="79.4"/></clipPath>
<clipPath id="mtcl"><rect x="645.1" y="594.0" width="91.7" height="77.1"/></clipPath>
<clipPath id="mtA"><rect x="933.2" y="515.2" width="82.7" height="77.9"/></clipPath>
<clipPath id="mtE"><rect x="933.2" y="593.1" width="82.7" height="50.4"/></clipPath>
<clipPath id="mtB"><rect x="1015.8" y="515.2" width="93.9" height="77.9"/></clipPath>
<clipPath id="mtD"><rect x="1015.8" y="593.1" width="93.9" height="78.5"/></clipPath>
<clipPath id="mtC"><rect x="1109.7" y="515.2" width="86.6" height="156.4"/></clipPath>
<clipPath id="mtF"><rect x="1015.8" y="671.6" width="180.5" height="59.6"/></clipPath></defs>
<g mask="url(#mcl)">
<rect x="610.2" y="510.2" width="145.7" height="202.4" fill="#a0a0a0"/>
<g clip-path="url(#mtls)">
<rect x="608.2" y="508.2" width="38.8" height="186.2" fill="#8e8e8e"/>
<g filter="url(#mb2)"><path d="M640.6 571.0 L641.8 591.2 L641.0 615.5 L641.8 664.1" stroke="#fff" stroke-width="10" fill="none" opacity="0.95" stroke-linecap="round" stroke-linejoin="round"/><path d="M635.5 603.4 L638.6 631.7 L640.6 651.9" stroke="#f0f0f0" stroke-width="10" fill="none" opacity="0.8" stroke-linecap="round" stroke-linejoin="round"/><ellipse cx="637.6" cy="530.5" rx="8.1" ry="14.2" fill="#b0b0b0" opacity="0.8"/><ellipse cx="633.5" cy="579.1" rx="6.1" ry="12.1" fill="#c4c4c4" opacity="0.7"/></g>
<g filter="url(#mb1)"><path d="M643.0 603.4 L643.0 668.1" stroke="#fff" stroke-width="3" fill="none" opacity="0.8" stroke-linecap="round" stroke-linejoin="round"/></g>
</g>
<g clip-path="url(#mtrs)">
<rect x="734.8" y="508.2" width="23.2" height="165.9" fill="#a8a8a8"/>
<g filter="url(#mb1)"><ellipse cx="744.3" cy="661.1" rx="5.3" ry="5.3" fill="#e8e8e8" opacity="0.95"/><ellipse cx="740.8" cy="523.4" rx="3.6" ry="9.1" fill="#e0e0e0" opacity="0.95"/><ellipse cx="738.8" cy="629.7" rx="2.8" ry="4.0" fill="#d0d0d0" opacity="0.8"/></g>
</g>
<g clip-path="url(#mtbs)">
<rect x="608.2" y="669.2" width="149.7" height="45.5" fill="#a8a8a8"/>
<g filter="url(#mb2)"><ellipse cx="695.3" cy="675.2" rx="24.3" ry="6.5" fill="#fff" opacity="1"/><ellipse cx="685.1" cy="684.3" rx="10.1" ry="8.1" fill="#f0f0f0" opacity="0.8"/><ellipse cx="719.6" cy="686.4" rx="8.1" ry="6.1" fill="#d8d8d8" opacity="0.7"/></g>
<g filter="url(#mb1)"><ellipse cx="695.3" cy="673.2" rx="18.2" ry="2.8" fill="#fff" opacity="0.9"/></g>
</g>
<g clip-path="url(#mtcu)">
<rect x="643.1" y="512.7" width="95.7" height="83.4" fill="#606060"/>
<g filter="url(#mb2)"><ellipse cx="723.6" cy="550.7" rx="16.2" ry="46.6" fill="#343434" opacity="0.9"/><ellipse cx="654.8" cy="562.9" rx="10.1" ry="32.4" fill="#4c4c4c" opacity="0.8"/><ellipse cx="656.8" cy="520.4" rx="14.2" ry="12.1" fill="#7c7c7c" opacity="0.7"/><path d="M698.3 512.3 L692.2 530.5 L686.8 544.7 L687.6 562.9 L685.5 579.1 L684.1 595.3" stroke="#c8c8c8" stroke-width="38" fill="none" opacity="0.7" stroke-linecap="round" stroke-linejoin="round"/><path d="M686.8 538.6 L671.0 556.8" stroke="#808080" stroke-width="12" fill="none" opacity="0.5" stroke-linecap="round" stroke-linejoin="round"/><path d="M687.2 566.9 L705.4 550.7 L719.6 530.5" stroke="#707070" stroke-width="10" fill="none" opacity="0.4" stroke-linecap="round" stroke-linejoin="round"/></g>
<g filter="url(#mb1)"><path d="M698.3 512.3 L692.2 530.5 L686.8 544.7 L687.6 562.9 L685.5 579.1 L684.1 595.3" stroke="#fff" stroke-width="9" fill="none" opacity="0.9" stroke-linecap="round" stroke-linejoin="round"/><ellipse cx="688.2" cy="539.6" rx="4.5" ry="6.1" fill="#fff" opacity="0.7"/></g>
</g>
<g clip-path="url(#mtcl)">
<rect x="643.1" y="592.0" width="95.7" height="81.1" fill="#545454"/>
<g filter="url(#mb2)"><ellipse cx="721.6" cy="619.6" rx="16.2" ry="24.3" fill="#3a3a3a" opacity="0.8"/><ellipse cx="656.8" cy="654.0" rx="12.1" ry="18.2" fill="#2a2a2a" opacity="0.9"/><ellipse cx="707.4" cy="664.1" rx="30.4" ry="8.1" fill="#3c3c3c" opacity="0.8"/><path d="M684.1 592.2 L686.8 607.4 L689.6 621.6 L688.2 639.8 L685.1 656.0" stroke="#c0c0c0" stroke-width="36" fill="none" opacity="0.6" stroke-linecap="round" stroke-linejoin="round"/><path d="M687.2 611.5 L671.0 619.6 L656.8 623.6" stroke="#787878" stroke-width="12" fill="none" opacity="0.45" stroke-linecap="round" stroke-linejoin="round"/><path d="M689.2 631.7 L707.4 639.8 L723.6 647.9" stroke="#707070" stroke-width="12" fill="none" opacity="0.4" stroke-linecap="round" stroke-linejoin="round"/></g>
<g filter="url(#mb1)"><path d="M684.1 592.2 L686.8 607.4 L689.6 621.6 L688.8 631.7" stroke="#fff" stroke-width="9" fill="none" opacity="0.8" stroke-linecap="round" stroke-linejoin="round"/></g>
</g>
<path d="M645.1 594.0 H736.8" stroke="#9a9a9a" stroke-width="1" opacity=".5"/>
<path d="M644.0 514.7 V670.2" stroke="#fff" stroke-width="1.3" opacity=".85"/>
<rect x="560" y="460" width="700" height="320" filter="url(#mtex)" opacity=".15"/>
<rect x="560" y="460" width="700" height="320" filter="url(#mtex2)" opacity=".2"/>
<path d="M745.9 514.7 L743.8 524.4 L746.9 533.5 L740.8 537.6 L736.2 540.6 L736.2 552.8 L738.8 556.8 L736.2 559.8 L737.8 566.9 L738.8 579.1 L734.7 591.2 L739.8 597.3 L731.7 609.4 L738.8 619.6 L741.8 629.7 L737.8 634.7 L728.7 640.8 L731.7 645.9 L740.8 651.9 L749.9 658.0 L749.9 664.1 L744.9 668.1 L738.8 664.1 L736.8 670.2 L725.6 672.2 L723.6 678.3 L731.7 684.3 L737.8 690.4 L735.7 695.5 L729.7 694.5 L723.6 700.5 L719.6 706.6 L713.5 704.6 L709.4 696.5 L703.4 690.4 L700.3 692.4 L695.3 702.6 L689.2 702.6 L682.1 694.5 L679.1 692.4 L677.0 684.3 L671.0 684.3 L667.9 674.2 L658.8 668.1 L652.8 668.1 L650.7 673.2 L643.6 672.2 L640.6 664.1 L634.5 658.0 L633.5 649.9 L628.5 639.8 L631.5 629.7 L626.4 619.6 L623.4 611.5 L627.4 605.4 L629.5 597.3 L623.4 591.2 L622.4 579.1 L625.4 571.0 L620.4 558.8 L623.4 548.7 L620.4 540.6 L622.4 530.5 L626.4 522.4 L628.5 514.7" stroke="#000" stroke-width="6" fill="none" opacity=".45" filter="url(#mb1)"/>
<path d="M745.9 514.7 L743.8 524.4 L746.9 533.5 L740.8 537.6 L736.2 540.6 L736.2 552.8 L738.8 556.8 L736.2 559.8 L737.8 566.9 L738.8 579.1 L734.7 591.2 L739.8 597.3 L731.7 609.4 L738.8 619.6 L741.8 629.7 L737.8 634.7 L728.7 640.8 L731.7 645.9 L740.8 651.9 L749.9 658.0 L749.9 664.1 L744.9 668.1 L738.8 664.1 L736.8 670.2 L725.6 672.2 L723.6 678.3 L731.7 684.3 L737.8 690.4 L735.7 695.5 L729.7 694.5 L723.6 700.5 L719.6 706.6 L713.5 704.6 L709.4 696.5 L703.4 690.4 L700.3 692.4 L695.3 702.6 L689.2 702.6 L682.1 694.5 L679.1 692.4 L677.0 684.3 L671.0 684.3 L667.9 674.2 L658.8 668.1 L652.8 668.1 L650.7 673.2 L643.6 672.2 L640.6 664.1 L634.5 658.0 L633.5 649.9 L628.5 639.8 L631.5 629.7 L626.4 619.6 L623.4 611.5 L627.4 605.4 L629.5 597.3 L623.4 591.2 L622.4 579.1 L625.4 571.0 L620.4 558.8 L623.4 548.7 L620.4 540.6 L622.4 530.5 L626.4 522.4 L628.5 514.7" stroke="#000" stroke-width="2.4" fill="none" opacity=".8" filter="url(#mjag)"/>
</g>
<g mask="url(#mcr)">
<rect x="937.5" y="511.9" width="263.2" height="219.3" fill="#707070"/>
<g clip-path="url(#mtA)">
<rect x="931.2" y="513.2" width="86.7" height="81.9" fill="#585858"/>
<g filter="url(#mb2)"><path d="M933.2 515.9 L1015.8 515.9" stroke="#0c0c0c" stroke-width="22" fill="none" opacity="0.9" stroke-linecap="round" stroke-linejoin="round"/><path d="M944.1 545.9 L963.9 552.5 L985.8 552.5 L1015.8 553.6" stroke="#d0d0d0" stroke-width="22" fill="none" opacity="0.85" stroke-linecap="round" stroke-linejoin="round"/><path d="M963.9 553.6 L979.2 564.6 L985.8 573.3" stroke="#a0a0a0" stroke-width="16" fill="none" opacity="0.6" stroke-linecap="round" stroke-linejoin="round"/><path d="M985.8 551.4 L994.6 536.1 L1007.7 527.3" stroke="#888" stroke-width="12" fill="none" opacity="0.5" stroke-linecap="round" stroke-linejoin="round"/><ellipse cx="1005.5" cy="584.3" rx="17.5" ry="12.1" fill="#0c0c0c" opacity="0.9"/></g>
<g filter="url(#mb1)"><path d="M950.7 548.1 L970.4 554.0 L992.4 552.7 L1015.8 554.0" stroke="#e8e8e8" stroke-width="8" fill="none" opacity="0.4" stroke-linecap="round" stroke-linejoin="round"/></g>
</g>
<g clip-path="url(#mtE)">
<rect x="931.2" y="591.1" width="86.7" height="54.4" fill="#8c8c8c"/>
<g filter="url(#mb2)"><ellipse cx="1008.8" cy="605.1" rx="12.1" ry="9.9" fill="#fff" opacity="1"/></g>
<g filter="url(#mb1)"><ellipse cx="1011.0" cy="605.1" rx="5.5" ry="6.6" fill="#fff" opacity="0.9"/></g>
</g>
<g clip-path="url(#mtB)">
<rect x="1013.8" y="513.2" width="97.9" height="81.9" fill="#484848"/>
<g filter="url(#mb2)"><ellipse cx="1027.5" cy="579.9" rx="13.2" ry="13.2" fill="#141414" opacity="0.9"/><ellipse cx="1102.0" cy="553.6" rx="13.2" ry="24.1" fill="#000" opacity="0.95"/><ellipse cx="1086.7" cy="522.9" rx="21.9" ry="6.6" fill="#2c2c2c" opacity="0.7"/><path d="M1046.1 515.2 L1048.9 533.9 L1053.8 551.4 L1069.1 566.8 L1082.3 582.1 L1093.2 595.3" stroke="#c0c0c0" stroke-width="40" fill="none" opacity="0.7" stroke-linecap="round" stroke-linejoin="round"/><path d="M1053.8 552.5 L1038.4 552.5 L1015.8 554.0" stroke="#a8a8a8" stroke-width="18" fill="none" opacity="0.6" stroke-linecap="round" stroke-linejoin="round"/><path d="M1049.4 533.9 L1064.7 531.7 L1077.9 537.1" stroke="#787878" stroke-width="12" fill="none" opacity="0.5" stroke-linecap="round" stroke-linejoin="round"/><path d="M1069.1 566.8 L1056.0 575.5 L1045.0 586.5" stroke="#6c6c6c" stroke-width="12" fill="none" opacity="0.5" stroke-linecap="round" stroke-linejoin="round"/><path d="M1082.3 582.1 L1093.2 573.3 L1099.8 577.7" stroke="#6c6c6c" stroke-width="10" fill="none" opacity="0.4" stroke-linecap="round" stroke-linejoin="round"/></g>
<g filter="url(#mb1)"><path d="M1046.1 515.2 L1048.9 533.9 L1053.8 551.4 L1069.1 566.8 L1082.3 582.1 L1093.2 595.3" stroke="#f4f4f4" stroke-width="9" fill="none" opacity="0.8" stroke-linecap="round" stroke-linejoin="round"/><ellipse cx="1046.1" cy="518.1" rx="6.6" ry="4.4" fill="#fff" opacity="0.95"/></g>
</g>
<g clip-path="url(#mtD)">
<rect x="1013.8" y="591.1" width="97.9" height="82.5" fill="#555"/>
<g filter="url(#mb2)"><ellipse cx="1042.8" cy="630.4" rx="19.7" ry="15.4" fill="#383838" opacity="0.7"/><ellipse cx="1086.7" cy="665.4" rx="15.4" ry="6.6" fill="#2c2c2c" opacity="0.7"/><path d="M1086.7 592.0 L1095.4 612.8 L1104.2 634.7 L1110.8 658.9" stroke="#b4b4b4" stroke-width="24" fill="none" opacity="0.7" stroke-linecap="round" stroke-linejoin="round"/><path d="M1060.4 594.8 L1086.7 593.9 L1109.7 595.7" stroke="#a0a0a0" stroke-width="12" fill="none" opacity="0.6" stroke-linecap="round" stroke-linejoin="round"/><path d="M1095.4 612.8 L1073.5 612.8 L1051.6 606.2" stroke="#7c7c7c" stroke-width="14" fill="none" opacity="0.5" stroke-linecap="round" stroke-linejoin="round"/><path d="M1104.2 634.7 L1086.7 641.3 L1071.3 652.3" stroke="#767676" stroke-width="14" fill="none" opacity="0.5" stroke-linecap="round" stroke-linejoin="round"/></g>
<g filter="url(#mb1)"><path d="M1087.8 593.1 L1096.5 612.8 L1105.3 634.7 L1110.8 658.9" stroke="#d8d8d8" stroke-width="8" fill="none" opacity="0.4" stroke-linecap="round" stroke-linejoin="round"/></g>
</g>
<g clip-path="url(#mtC)">
<rect x="1107.7" y="513.2" width="90.6" height="160.4" fill="#545454"/>
<g filter="url(#mb2)"><path d="M1109.7 515.9 L1167.8 515.9" stroke="#202020" stroke-width="22" fill="none" opacity="0.85" stroke-linecap="round" stroke-linejoin="round"/><path d="M1110.8 555.8 L1130.5 566.8 L1148.1 584.3 L1156.8 604.0" stroke="#a8a8a8" stroke-width="16" fill="none" opacity="0.6" stroke-linecap="round" stroke-linejoin="round"/><path d="M1113.0 597.5 L1130.5 604.0 L1148.1 612.8 L1159.0 623.8" stroke="#a4a4a4" stroke-width="16" fill="none" opacity="0.55" stroke-linecap="round" stroke-linejoin="round"/><path d="M1113.0 657.8 L1130.5 647.9 L1152.5 646.8 L1178.8 650.1" stroke="#b0b0b0" stroke-width="20" fill="none" opacity="0.7" stroke-linecap="round" stroke-linejoin="round"/><path d="M1110.8 630.4 L1123.9 626.0 L1139.3 630.4" stroke="#8c8c8c" stroke-width="14" fill="none" opacity="0.5" stroke-linecap="round" stroke-linejoin="round"/><path d="M1130.5 533.9 L1139.3 547.0 L1152.5 544.8" stroke="#808080" stroke-width="12" fill="none" opacity="0.45" stroke-linecap="round" stroke-linejoin="round"/></g>
<g filter="url(#mb1)"><ellipse cx="1113.6" cy="658.9" rx="6.1" ry="7.9" fill="#fff" opacity="0.95"/></g>
</g>
<g clip-path="url(#mtF)">
<rect x="1013.8" y="669.6" width="184.5" height="63.6" fill="#555"/>
<g filter="url(#mb2)"><ellipse cx="1106.4" cy="676.0" rx="17.5" ry="7.9" fill="#fff" opacity="1"/><path d="M1106.4 675.3 L1108.6 691.8 L1110.8 707.1" stroke="#909090" stroke-width="20" fill="none" opacity="0.6" stroke-linecap="round" stroke-linejoin="round"/><path d="M1106.4 675.3 L1128.3 680.8 L1152.5 678.6" stroke="#a0a0a0" stroke-width="16" fill="none" opacity="0.6" stroke-linecap="round" stroke-linejoin="round"/><path d="M1106.4 675.3 L1086.7 683.0" stroke="#a0a0a0" stroke-width="14" fill="none" opacity="0.6" stroke-linecap="round" stroke-linejoin="round"/><ellipse cx="1110.8" cy="720.3" rx="13.2" ry="8.8" fill="#141414" opacity="0.9"/></g>
<g filter="url(#mb1)"><ellipse cx="1106.4" cy="673.8" rx="8.8" ry="2.6" fill="#fff" opacity="0.9"/></g>
</g>
<rect x="560" y="460" width="700" height="320" filter="url(#mtex)" opacity=".15"/>
<rect x="560" y="460" width="700" height="320" filter="url(#mtex2)" opacity=".2"/>
<path d="M1166.1 515.2 L1168.9 520.7 L1168.9 526.2 L1161.2 531.7 L1160.1 537.1 L1164.5 542.6 L1161.2 547.0 L1148.1 552.5 L1139.3 560.2 L1145.9 566.8 L1152.5 573.3 L1155.7 582.1 L1161.2 593.1 L1166.7 599.6 L1167.8 608.4 L1165.6 615.0 L1157.9 619.4 L1155.7 623.8 L1161.2 630.4 L1167.8 639.1 L1174.4 641.3 L1183.2 643.5 L1191.9 646.8 L1190.8 652.3 L1183.2 658.9 L1172.2 669.8 L1170.0 676.4 L1161.2 680.8 L1152.5 685.2 L1148.1 689.6 L1141.5 695.0 L1130.5 700.5 L1125.0 707.1 L1127.2 713.7 L1123.9 722.5 L1118.5 727.9 L1106.4 726.8 L1097.6 720.3 L1093.2 713.7 L1095.4 703.8 L1088.9 698.3 L1080.1 693.9 L1073.5 685.2 L1068.0 676.4 L1064.7 665.4 L1060.4 656.7 L1051.6 653.4 L1042.8 647.9 L1029.6 641.3 L1020.9 632.5 L1015.8 622.7 L1007.7 620.5 L996.8 615.0 L990.2 608.4 L982.5 604.0 L984.7 597.5 L977.0 592.0 L969.3 586.5 L971.5 577.7 L967.1 571.1 L952.9 562.4 L941.9 553.6 L940.8 542.6 L943.7 533.9 L942.6 515.2" stroke="#000" stroke-width="7" fill="none" opacity=".5" filter="url(#mb1)"/>
<path d="M1166.1 515.2 L1168.9 520.7 L1168.9 526.2 L1161.2 531.7 L1160.1 537.1 L1164.5 542.6 L1161.2 547.0 L1148.1 552.5 L1139.3 560.2 L1145.9 566.8 L1152.5 573.3 L1155.7 582.1 L1161.2 593.1 L1166.7 599.6 L1167.8 608.4 L1165.6 615.0 L1157.9 619.4 L1155.7 623.8 L1161.2 630.4 L1167.8 639.1 L1174.4 641.3 L1183.2 643.5 L1191.9 646.8 L1190.8 652.3 L1183.2 658.9 L1172.2 669.8 L1170.0 676.4 L1161.2 680.8 L1152.5 685.2 L1148.1 689.6 L1141.5 695.0 L1130.5 700.5 L1125.0 707.1 L1127.2 713.7 L1123.9 722.5 L1118.5 727.9 L1106.4 726.8 L1097.6 720.3 L1093.2 713.7 L1095.4 703.8 L1088.9 698.3 L1080.1 693.9 L1073.5 685.2 L1068.0 676.4 L1064.7 665.4 L1060.4 656.7 L1051.6 653.4 L1042.8 647.9 L1029.6 641.3 L1020.9 632.5 L1015.8 622.7 L1007.7 620.5 L996.8 615.0 L990.2 608.4 L982.5 604.0 L984.7 597.5 L977.0 592.0 L969.3 586.5 L971.5 577.7 L967.1 571.1 L952.9 562.4 L941.9 553.6 L940.8 542.6 L943.7 533.9 L942.6 515.2" stroke="#000" stroke-width="2.4" fill="none" opacity=".8" filter="url(#mjag)"/>
</g></svg><div class="abs" style="left:595px;top:849px;width:87px;height:6px;background:#fff;border:1px solid #000"></div><div class="abs" style="left:689px;top:849px;width:53px;height:6px;background:#fff;border:1px solid #000"></div>
</div>
<div class="abs" style="left:0;right:0;top:971px;height:1px;background:#a0a0a0"></div>
<div class="abs" style="left:0;right:0;top:972px;height:1px;background:#8c8c8c"></div>
<div class="t " style="left:5px;top:978px;letter-spacing:0.556px;">Time to draw: 0.138 seconds</div>
<div class="abs" style="left:281px;top:973px;width:1px;height:31px;background:#808080"></div>
<div class="abs" style="left:305px;top:973px;width:1px;height:31px;background:#808080"></div>
<div class="abs" style="left:601px;top:973px;width:1px;height:31px;background:#808080"></div>
<div class="abs" style="left:897px;top:973px;width:1px;height:31px;background:#808080"></div>
<div class="abs" style="left:1009px;top:973px;width:1px;height:31px;background:#808080"></div>
<div class="abs" style="left:1124px;top:973px;width:1px;height:31px;background:#808080"></div>
<svg style="left:284px;top:978px" width="20" height="20" viewBox="0 0 20 20" shape-rendering="crispEdges"><rect x="1" y="1" width="18" height="18" fill="#fff" stroke="#00c8d8" stroke-width="2"/><path d="M10 5v10M5 10h10" stroke="#e00000" stroke-width="3"/><rect x="9" y="9" width="2" height="2" fill="#fff"/></svg>
<div class="t " style="left:311px;top:978px;letter-spacing:0.435px;">E 141.5500  N 38.2709</div>
<div class="t " style="left:606px;top:978px;letter-spacing:0.491px;">E 141 33 00.0  N 38 16 15.2</div>
<div class="t " style="left:1015px;top:978px;letter-spacing:0.267px;">1:75050</div>
</div>
</body></html>
